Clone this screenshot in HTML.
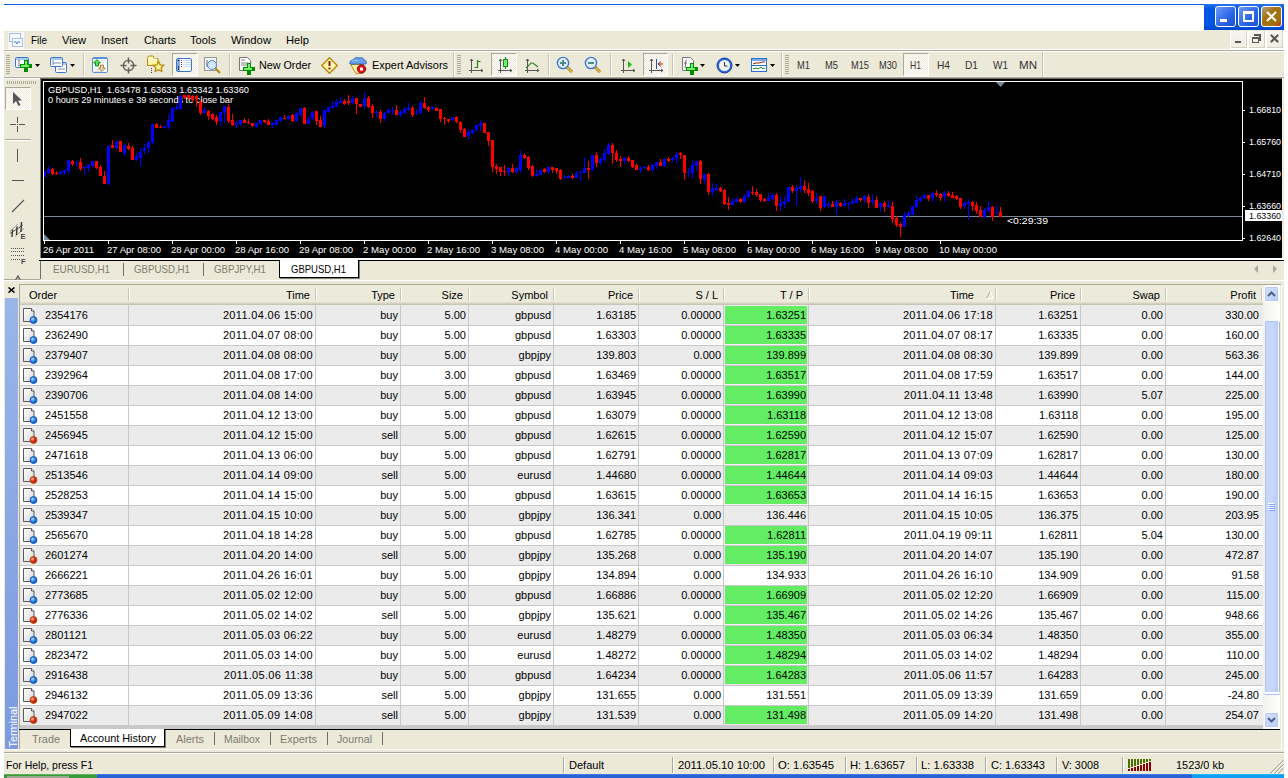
<!DOCTYPE html><html><head><meta charset="utf-8"><style>

*{box-sizing:border-box}
body{margin:0;width:1288px;height:778px;position:relative;overflow:hidden;background:#fff;font-family:"Liberation Sans",sans-serif;font-size:11px;color:#000}
.a{position:absolute}
.t{position:absolute;white-space:nowrap;line-height:13px}
.r{position:absolute;white-space:nowrap;line-height:13px;text-align:right}
</style></head><body>
<svg width="0" height="0" style="position:absolute"><defs><linearGradient id="gd" x1="0" y1="0" x2="1" y2="1"><stop offset="0" stop-color="#fff"/><stop offset="1" stop-color="#d8d8d8"/></linearGradient><radialGradient id="gb" cx="0.35" cy="0.35" r="0.7"><stop offset="0" stop-color="#b8e0ff"/><stop offset="0.5" stop-color="#2a8af0"/><stop offset="1" stop-color="#0a50c0"/></radialGradient><radialGradient id="gr" cx="0.35" cy="0.35" r="0.7"><stop offset="0" stop-color="#ffd0c0"/><stop offset="0.5" stop-color="#f02010"/><stop offset="1" stop-color="#b02000"/></radialGradient></defs></svg>

<div class="a" style="left:4px;top:4px;width:1200px;height:1px;background:#0a5ce8"></div>
<div class="a" style="left:1204px;top:4px;width:80px;height:26px;background:linear-gradient(#2a74f0,#0054e3 20%,#0055e6 80%,#0046c8)"></div>
<div class="a" style="left:1215px;top:6px;width:21px;height:21px;border:1px solid #fff;border-radius:3px;background:linear-gradient(135deg,#6f9cf8,#2a64e8 60%,#1d4fd0)"></div>
<div class="a" style="left:1238px;top:6px;width:21px;height:21px;border:1px solid #fff;border-radius:3px;background:linear-gradient(135deg,#6f9cf8,#2a64e8 60%,#1d4fd0)"></div>
<div class="a" style="left:1261px;top:6px;width:21px;height:21px;border:1px solid #fff;border-radius:3px;background:linear-gradient(135deg,#b0a080,#a6700e 40%,#a07010 80%,#e02010)"></div>
<div class="a" style="left:1220px;top:19px;width:7px;height:3px;background:#fff"></div>
<div class="a" style="left:1243px;top:11px;width:11px;height:11px;border:2px solid #fff;border-top-width:3px"></div>
<svg class="a" style="left:1261px;top:6px" width="21" height="21"><path d="M6 6L15 15M15 6L6 15" stroke="#fff" stroke-width="2"/></svg>
<div class="a" style="left:4px;top:31px;width:1280px;height:743px;background:#ece9d8"></div>
<div class="a" style="left:1204px;top:30px;width:80px;height:1px;background:#ece9d8"></div>
<div class="a" style="left:8px;top:32px;width:16px;height:17px;background:#f8f8f4"></div>
<svg class="a" style="left:8px;top:32px" width="16" height="16"><rect x="1.5" y="1.5" width="11" height="8" fill="none" stroke="#4a8af0" stroke-dasharray="1 1"/><rect x="4.5" y="6.5" width="10" height="8" fill="#fff" stroke="#4a8af0" stroke-dasharray="1 1"/><path d="M6 11l1.5-2 1.5 3 1.5-3 1.5 2" stroke="#4a8af0" fill="none"/></svg>
<svg class="a" style="left:30px;top:30px;overflow:visible" width="19" height="18"><text x="1" y="14" textLength="16" lengthAdjust="spacingAndGlyphs" font-family="Liberation Sans" font-size="11" font-weight="normal" fill="#000" xml:space="preserve">File</text></svg>
<svg class="a" style="left:61px;top:30px;overflow:visible" width="27" height="18"><text x="1" y="14" textLength="24" lengthAdjust="spacingAndGlyphs" font-family="Liberation Sans" font-size="11" font-weight="normal" fill="#000" xml:space="preserve">View</text></svg>
<svg class="a" style="left:100px;top:30px;overflow:visible" width="30" height="18"><text x="1" y="14" textLength="27" lengthAdjust="spacingAndGlyphs" font-family="Liberation Sans" font-size="11" font-weight="normal" fill="#000" xml:space="preserve">Insert</text></svg>
<svg class="a" style="left:143px;top:30px;overflow:visible" width="35" height="18"><text x="1" y="14" textLength="32" lengthAdjust="spacingAndGlyphs" font-family="Liberation Sans" font-size="11" font-weight="normal" fill="#000" xml:space="preserve">Charts</text></svg>
<svg class="a" style="left:189px;top:30px;overflow:visible" width="29" height="18"><text x="1" y="14" textLength="26" lengthAdjust="spacingAndGlyphs" font-family="Liberation Sans" font-size="11" font-weight="normal" fill="#000" xml:space="preserve">Tools</text></svg>
<svg class="a" style="left:230px;top:30px;overflow:visible" width="43" height="18"><text x="1" y="14" textLength="40" lengthAdjust="spacingAndGlyphs" font-family="Liberation Sans" font-size="11" font-weight="normal" fill="#000" xml:space="preserve">Window</text></svg>
<svg class="a" style="left:285px;top:30px;overflow:visible" width="26" height="18"><text x="1" y="14" textLength="23" lengthAdjust="spacingAndGlyphs" font-family="Liberation Sans" font-size="11" font-weight="normal" fill="#000" xml:space="preserve">Help</text></svg>
<div class="a" style="left:1230px;top:31px;width:54px;height:18px;background:#fff"></div>
<div class="a" style="left:1231px;top:31px;width:16px;height:17px;background:linear-gradient(#f6f5f0,#efede4);border-right:1px solid #d6d2c4;border-bottom:1px solid #d6d2c4"></div>
<div class="a" style="left:1249px;top:31px;width:16px;height:17px;background:linear-gradient(#f6f5f0,#efede4);border-right:1px solid #d6d2c4;border-bottom:1px solid #d6d2c4"></div>
<div class="a" style="left:1267px;top:31px;width:16px;height:17px;background:linear-gradient(#f6f5f0,#efede4);border-right:1px solid #d6d2c4;border-bottom:1px solid #d6d2c4"></div>
<div class="a" style="left:1235px;top:41px;width:6px;height:2px;background:#5a5850"></div>
<svg class="a" style="left:1249px;top:31px" width="16" height="16"><path d="M6 4h5v5" stroke="#5a5850" stroke-width="2" fill="none" stroke-linecap="square"/><rect x="3.5" y="6.5" width="6" height="5" fill="none" stroke="#5a5850"/><rect x="3" y="6" width="7" height="2" fill="#5a5850"/></svg>
<svg class="a" style="left:1267px;top:31px" width="16" height="16"><path d="M4.5 4.5L10.5 10.5M10.5 4.5L4.5 10.5" stroke="#5a5850" stroke-width="2.2" stroke-linecap="round"/></svg>
<div class="a" style="left:4px;top:49px;width:1280px;height:1px;background:#fff"></div>
<div class="a" style="left:4px;top:50px;width:1280px;height:1px;background:#aca899"></div>
<div class="a" style="left:4px;top:51px;width:1280px;height:1px;background:#fff"></div>
<div class="a" style="left:4px;top:76px;width:1280px;height:1px;background:#f4f2e8"></div>
<div class="a" style="left:4px;top:77px;width:1280px;height:1px;background:#aca899"></div>
<svg class="a" style="left:6px;top:55px" width="4" height="20"><rect x="0" y="0" width="4" height="1" fill="#aeaa98"/><rect x="0" y="2" width="4" height="1" fill="#aeaa98"/><rect x="0" y="4" width="4" height="1" fill="#aeaa98"/><rect x="0" y="6" width="4" height="1" fill="#aeaa98"/><rect x="0" y="8" width="4" height="1" fill="#aeaa98"/><rect x="0" y="10" width="4" height="1" fill="#aeaa98"/><rect x="0" y="12" width="4" height="1" fill="#aeaa98"/><rect x="0" y="14" width="4" height="1" fill="#aeaa98"/><rect x="0" y="16" width="4" height="1" fill="#aeaa98"/><rect x="0" y="18" width="4" height="1" fill="#aeaa98"/></svg>
<svg class="a" style="left:15px;top:57px" width="14" height="11"><rect x="0.5" y="0.5" width="13" height="10" rx="1" fill="#fff" stroke="#3a78d0"/><rect x="1" y="1" width="12" height="2" fill="#a8c8f0"/></svg>
<svg class="a" style="left:15px;top:57px" width="14" height="11"><path d="M4 3v6M3 4l1-1 1 1M3 8l1 1 1-1" stroke="#7890b0" fill="none"/></svg>
<svg class="a" style="left:20px;top:60px" width="12" height="12"><path d="M4 0h4v4h4v4h-4v4h-4v-4h-4v-4h4z" fill="#008a00"/><rect x="5" y="1" width="2" height="5" fill="#70f070"/><rect x="1" y="5" width="8" height="2" fill="#70f070"/></svg>
<svg class="a" style="left:35px;top:64px" width="5" height="3"><path d="M0 0h5l-2.5 3z" fill="#000"/></svg>
<svg class="a" style="left:55px;top:62px" width="12" height="11"><rect x="0.5" y="0.5" width="11" height="10" rx="1" fill="#fff" stroke="#3a78d0"/><rect x="1" y="1" width="10" height="2" fill="#a8c8f0"/></svg>
<svg class="a" style="left:50px;top:57px" width="13" height="10"><rect x="0.5" y="0.5" width="12" height="9" rx="1" fill="#fff" stroke="#3a78d0"/><rect x="1" y="1" width="11" height="2" fill="#a8c8f0"/></svg>
<svg class="a" style="left:50px;top:57px" width="18" height="17"><path d="M3 3v5M3 6h8M8 12h7" stroke="#7890b0" fill="none"/></svg>
<svg class="a" style="left:70px;top:64px" width="5" height="3"><path d="M0 0h5l-2.5 3z" fill="#000"/></svg>
<div class="a" style="left:83px;top:54px;width:1px;height:21px;background:#c5c2b2"></div><div class="a" style="left:84px;top:54px;width:1px;height:21px;background:#fff"></div>
<svg class="a" style="left:92px;top:57px" width="17" height="17"><rect x="0.5" y="0.5" width="15" height="15" rx="1.5" fill="#fff" stroke="#5a90e0"/><rect x="1" y="1" width="14" height="1" fill="#5a90e0"/><path d="M9 3.5h3M13 3.5h1M9 5.5h3M13 5.5h1M3 12.5h7M3 14.5h7" stroke="#dcdcdc"/><path d="M5 2.5l3.5 3.5h-2v3h-3v-3h-2z" fill="#60e060" stroke="#008000" stroke-width="0.9"/><path d="M10 14.5l-3.5-3.5h2v-3h3v3h2z" fill="#d8d8d0" stroke="#b07a10" stroke-width="0.9"/></svg>
<svg class="a" style="left:120px;top:57px" width="17" height="17"><circle cx="8.5" cy="8.5" r="5.2" fill="none" stroke="#5e5e5e" stroke-width="1.3"/><path d="M8.5 0.5v6M8.5 10.5v6M0.5 8.5h6M10.5 8.5h6" stroke="#5e5e5e" stroke-width="1.5"/></svg>
<svg class="a" style="left:146px;top:55px" width="20" height="20"><path d="M1.5 3.5c0-2 1-2.5 2.5-2.5h2c1.5 0 2 .5 2 2.5h4v7h-10.5z" fill="#fff8a8" stroke="#b8860b"/><path d="M2 4h9" stroke="#fff" /><path d="M12.5 6.5l1.7 3.3 3.6.5-2.6 2.5.6 3.6-3.3-1.7-3.3 1.7.6-3.6-2.6-2.5 3.6-.5z" fill="#fffaa0" stroke="#b8860b" stroke-width="1.3"/><rect x="5" y="13" width="1" height="1" fill="#444"/><rect x="5" y="15" width="1" height="1" fill="#444"/><rect x="5" y="17" width="1" height="1" fill="#444"/></svg>
<div class="a" style="left:172px;top:53px;width:26px;height:23px;border-top:1px solid #aca899;border-left:1px solid #aca899;border-right:1px solid #fff;border-bottom:1px solid #fff;background-color:#f5f4ee;background-image:repeating-conic-gradient(#fff 0 25%,#ece9d8 0 50%);background-size:2px 2px"></div>
<svg class="a" style="left:176px;top:58px" width="17" height="15"><rect x="0.5" y="0.5" width="15" height="13" rx="1.5" fill="#fff" stroke="#3a78d0"/><rect x="1" y="1" width="3" height="12" fill="#8aa8e0"/><rect x="2" y="2" width="1" height="1" fill="#000"/><rect x="2" y="8" width="1" height="4" fill="#444"/><rect x="7" y="2" width="8" height="1" fill="#c8dcf8"/><rect x="7" y="4" width="8" height="1" fill="#c8dcf8"/><rect x="7" y="6" width="8" height="1" fill="#c8dcf8"/><rect x="7" y="8" width="8" height="1" fill="#c8dcf8"/><rect x="5" y="2" width="1" height="1" fill="#e00"/><rect x="5" y="4" width="1" height="1" fill="#444"/><rect x="5" y="6" width="1" height="1" fill="#444"/><rect x="5" y="8" width="1" height="1" fill="#e00"/></svg>
<svg class="a" style="left:204px;top:57px" width="19" height="18"><rect x="0.5" y="0.5" width="12" height="13" fill="#f4f4f4" stroke="#999"/><path d="M3 3v7M9 3v7" stroke="#666"/><circle cx="8" cy="8" r="4.5" fill="#d8e8ff" stroke="#4a8ae0"/><path d="M11 11l5 5" stroke="#b08a10" stroke-width="2.2"/></svg>
<div class="a" style="left:229px;top:54px;width:1px;height:21px;background:#c5c2b2"></div><div class="a" style="left:230px;top:54px;width:1px;height:21px;background:#fff"></div>
<svg class="a" style="left:239px;top:57px" width="17" height="19"><path d="M0.5 0.5h8l3 3v10h-11z" fill="#fafafa" stroke="#777"/><path d="M2 3h4M2 6h7M2 8h7" stroke="#888"/></svg>
<svg class="a" style="left:243px;top:63px" width="12" height="12"><path d="M4 0h4v4h4v4h-4v4h-4v-4h-4v-4h4z" fill="#008a00"/><rect x="5" y="1" width="2" height="5" fill="#70f070"/><rect x="1" y="5" width="8" height="2" fill="#70f070"/></svg>
<svg class="a" style="left:258px;top:55px;overflow:visible" width="55" height="18"><text x="1" y="14" textLength="52" lengthAdjust="spacingAndGlyphs" font-family="Liberation Sans" font-size="11" font-weight="normal" fill="#000" xml:space="preserve">New Order</text></svg>
<svg class="a" style="left:321px;top:57px" width="17" height="17"><path d="M8.5 0.7l7.8 7.8-7.8 7.8-7.8-7.8z" fill="#fff8a8" stroke="#b8860b" stroke-width="1.4"/><path d="M8.5 4v5" stroke="#8a1a1a" stroke-width="2"/><rect x="7.5" y="10.5" width="2" height="2" fill="#8a1a1a"/></svg>
<svg class="a" style="left:348px;top:56px" width="20" height="19"><path d="M2.5 8.5h13l-2 8-5 1.5z" fill="#fff7a0" stroke="#b8860b"/><path d="M2 8c-1-2 1-4 3-4 1-2 4-3 6-2 2-1 5 0 5 2 2 0 3 2 2 4z" fill="#6aa0e8" stroke="#3a70c0"/><path d="M4 5c2-1 4-1 6 0" stroke="#a8ccf8" fill="none"/><circle cx="13.5" cy="13" r="4.2" fill="#e81010" stroke="#7a1010"/><rect x="12" y="11.5" width="3" height="3" fill="#fff"/></svg>
<svg class="a" style="left:371px;top:55px;overflow:visible" width="79" height="18"><text x="1" y="14" textLength="76" lengthAdjust="spacingAndGlyphs" font-family="Liberation Sans" font-size="11" font-weight="normal" fill="#000" xml:space="preserve">Expert Advisors</text></svg>
<div class="a" style="left:453px;top:52px;width:1px;height:25px;background:#c5c2b2"></div><div class="a" style="left:454px;top:52px;width:1px;height:25px;background:#fff"></div>
<svg class="a" style="left:457px;top:55px" width="4" height="20"><rect x="0" y="0" width="4" height="1" fill="#aeaa98"/><rect x="0" y="2" width="4" height="1" fill="#aeaa98"/><rect x="0" y="4" width="4" height="1" fill="#aeaa98"/><rect x="0" y="6" width="4" height="1" fill="#aeaa98"/><rect x="0" y="8" width="4" height="1" fill="#aeaa98"/><rect x="0" y="10" width="4" height="1" fill="#aeaa98"/><rect x="0" y="12" width="4" height="1" fill="#aeaa98"/><rect x="0" y="14" width="4" height="1" fill="#aeaa98"/><rect x="0" y="16" width="4" height="1" fill="#aeaa98"/><rect x="0" y="18" width="4" height="1" fill="#aeaa98"/></svg>
<svg class="a" style="left:467px;top:58px" width="18" height="17"><path d="M4.5 1v14M2 12.5h14" stroke="#555" stroke-width="1"/><path d="M3 3l1.5-2 1.5 2M14 11l2 1.5-2 1.5" stroke="#555" fill="none"/><path d="M10.5 2v8M10.5 3.5h3M7.5 9.5h3" stroke="#1a8a1a" stroke-width="1.2" fill="none"/></svg>
<div class="a" style="left:491px;top:53px;width:26px;height:23px;border-top:1px solid #aca899;border-left:1px solid #aca899;border-right:1px solid #fff;border-bottom:1px solid #fff;background-color:#f5f4ee;background-image:repeating-conic-gradient(#fff 0 25%,#ece9d8 0 50%);background-size:2px 2px"></div>
<svg class="a" style="left:496px;top:57px" width="18" height="17"><path d="M4.5 2v14M2 13.5h14" stroke="#555" stroke-width="1"/><path d="M3 4l1.5-2 1.5 2M14 12l2 1.5-2 1.5" stroke="#555" fill="none"/><path d="M9.5 0v12" stroke="#1a8a1a" stroke-width="1.2"/><rect x="7.5" y="2.5" width="4" height="7" fill="#70f070" stroke="#1a8a1a"/></svg>
<svg class="a" style="left:523px;top:58px" width="18" height="17"><path d="M4.5 1v14M2 12.5h14" stroke="#555" stroke-width="1"/><path d="M3 3l1.5-2 1.5 2M14 11l2 1.5-2 1.5" stroke="#555" fill="none"/><path d="M3 10l5-5 2 0 5 4" stroke="#2a8a2a" fill="none" stroke-width="1.2"/></svg>
<div class="a" style="left:548px;top:54px;width:1px;height:21px;background:#c5c2b2"></div><div class="a" style="left:549px;top:54px;width:1px;height:21px;background:#fff"></div>
<svg class="a" style="left:556px;top:56px" width="19" height="19"><path d="M10 10l6 6" stroke="#9a7a10" stroke-width="3"/><path d="M10 10l6 6" stroke="#e8c050" stroke-width="1.5"/><circle cx="7" cy="7" r="5.6" fill="#e4ecfa" stroke="#3a78d0" stroke-width="1.4"/><path d="M4 7h6M7 4v6" stroke="#4a8a8a" stroke-width="2"/></svg>
<svg class="a" style="left:584px;top:56px" width="19" height="19"><path d="M10 10l6 6" stroke="#9a7a10" stroke-width="3"/><path d="M10 10l6 6" stroke="#e8c050" stroke-width="1.5"/><circle cx="7" cy="7" r="5.6" fill="#e4ecfa" stroke="#3a78d0" stroke-width="1.4"/><path d="M4 7h6" stroke="#4a8a8a" stroke-width="2"/></svg>
<div class="a" style="left:610px;top:54px;width:1px;height:21px;background:#c5c2b2"></div><div class="a" style="left:611px;top:54px;width:1px;height:21px;background:#fff"></div>
<svg class="a" style="left:619px;top:58px" width="18" height="17"><path d="M4.5 1v14M2 12.5h14" stroke="#555" stroke-width="1"/><path d="M3 3l1.5-2 1.5 2M14 11l2 1.5-2 1.5" stroke="#555" fill="none"/><path d="M9 3v7l4-3.5z" fill="#1ac01a"/></svg>
<div class="a" style="left:643px;top:53px;width:25px;height:23px;border-top:1px solid #aca899;border-left:1px solid #aca899;border-right:1px solid #fff;border-bottom:1px solid #fff;background-color:#f5f4ee;background-image:repeating-conic-gradient(#fff 0 25%,#ece9d8 0 50%);background-size:2px 2px"></div>
<svg class="a" style="left:647px;top:58px" width="18" height="17"><path d="M4.5 1v14M2 12.5h14" stroke="#555" stroke-width="1"/><path d="M3 3l1.5-2 1.5 2M14 11l2 1.5-2 1.5" stroke="#555" fill="none"/><path d="M9.5 1v10" stroke="#2050c0"/><path d="M11 6h5M11 6l3-2.5M11 6l3 2.5" stroke="#a02010" fill="none"/></svg>
<div class="a" style="left:672px;top:54px;width:1px;height:21px;background:#c5c2b2"></div><div class="a" style="left:673px;top:54px;width:1px;height:21px;background:#fff"></div>
<svg class="a" style="left:682px;top:57px" width="12" height="14"><path d="M0.5 0.5h8l3 3v10h-11z" fill="#fafafa" stroke="#777"/><path d="M5 3c-2 0-1 4-2 8M2 6h3" stroke="#666" fill="none"/></svg>
<svg class="a" style="left:686px;top:63px" width="12" height="12"><path d="M4 0h4v4h4v4h-4v4h-4v-4h-4v-4h4z" fill="#008a00"/><rect x="5" y="1" width="2" height="5" fill="#70f070"/><rect x="1" y="5" width="8" height="2" fill="#70f070"/></svg>
<svg class="a" style="left:700px;top:64px" width="5" height="3"><path d="M0 0h5l-2.5 3z" fill="#000"/></svg>
<svg class="a" style="left:716px;top:57px" width="17" height="17"><circle cx="8.5" cy="8.5" r="7.5" fill="#2a6ae0" stroke="#1040a0"/><circle cx="8.5" cy="8.5" r="5.5" fill="#f4f4f4"/><path d="M8.5 5v4h3" stroke="#333" fill="none"/></svg>
<svg class="a" style="left:735px;top:64px" width="5" height="3"><path d="M0 0h5l-2.5 3z" fill="#000"/></svg>
<svg class="a" style="left:751px;top:58px" width="17" height="15"><rect x="0.5" y="0.5" width="15" height="13" fill="#fff" stroke="#2a70d0"/><rect x="1" y="1" width="14" height="2" fill="#7aa8e8"/><path d="M1 7.5h14" stroke="#2a70d0"/><path d="M2 6l3-1 3 0 3-1 3 0" stroke="#a02010" fill="none"/><path d="M2 11l3-1 2 1 3-2 2 2 2-1" stroke="#1a8a1a" fill="none"/></svg>
<svg class="a" style="left:770px;top:64px" width="5" height="3"><path d="M0 0h5l-2.5 3z" fill="#000"/></svg>
<div class="a" style="left:781px;top:52px;width:1px;height:25px;background:#c5c2b2"></div><div class="a" style="left:782px;top:52px;width:1px;height:25px;background:#fff"></div>
<svg class="a" style="left:785px;top:55px" width="4" height="20"><rect x="0" y="0" width="4" height="1" fill="#aeaa98"/><rect x="0" y="2" width="4" height="1" fill="#aeaa98"/><rect x="0" y="4" width="4" height="1" fill="#aeaa98"/><rect x="0" y="6" width="4" height="1" fill="#aeaa98"/><rect x="0" y="8" width="4" height="1" fill="#aeaa98"/><rect x="0" y="10" width="4" height="1" fill="#aeaa98"/><rect x="0" y="12" width="4" height="1" fill="#aeaa98"/><rect x="0" y="14" width="4" height="1" fill="#aeaa98"/><rect x="0" y="16" width="4" height="1" fill="#aeaa98"/><rect x="0" y="18" width="4" height="1" fill="#aeaa98"/></svg>
<div class="a" style="left:903px;top:53px;width:26px;height:23px;border-top:1px solid #aca899;border-left:1px solid #aca899;border-right:1px solid #fff;border-bottom:1px solid #fff;background-color:#f5f4ee;background-image:repeating-conic-gradient(#fff 0 25%,#ece9d8 0 50%);background-size:2px 2px"></div>
<svg class="a" style="left:796px;top:55px;overflow:visible" width="16" height="18"><text x="1" y="14" textLength="13" lengthAdjust="spacingAndGlyphs" font-family="Liberation Sans" font-size="11" font-weight="normal" fill="#333" xml:space="preserve">M1</text></svg>
<svg class="a" style="left:824px;top:55px;overflow:visible" width="16" height="18"><text x="1" y="14" textLength="13" lengthAdjust="spacingAndGlyphs" font-family="Liberation Sans" font-size="11" font-weight="normal" fill="#333" xml:space="preserve">M5</text></svg>
<svg class="a" style="left:850px;top:55px;overflow:visible" width="21" height="18"><text x="1" y="14" textLength="18" lengthAdjust="spacingAndGlyphs" font-family="Liberation Sans" font-size="11" font-weight="normal" fill="#333" xml:space="preserve">M15</text></svg>
<svg class="a" style="left:878px;top:55px;overflow:visible" width="21" height="18"><text x="1" y="14" textLength="18" lengthAdjust="spacingAndGlyphs" font-family="Liberation Sans" font-size="11" font-weight="normal" fill="#333" xml:space="preserve">M30</text></svg>
<svg class="a" style="left:909px;top:55px;overflow:visible" width="14" height="18"><text x="1" y="14" textLength="11" lengthAdjust="spacingAndGlyphs" font-family="Liberation Sans" font-size="11" font-weight="normal" fill="#333" xml:space="preserve">H1</text></svg>
<svg class="a" style="left:936px;top:55px;overflow:visible" width="16" height="18"><text x="1" y="14" textLength="13" lengthAdjust="spacingAndGlyphs" font-family="Liberation Sans" font-size="11" font-weight="normal" fill="#333" xml:space="preserve">H4</text></svg>
<svg class="a" style="left:964px;top:55px;overflow:visible" width="16" height="18"><text x="1" y="14" textLength="13" lengthAdjust="spacingAndGlyphs" font-family="Liberation Sans" font-size="11" font-weight="normal" fill="#333" xml:space="preserve">D1</text></svg>
<svg class="a" style="left:992px;top:55px;overflow:visible" width="18" height="18"><text x="1" y="14" textLength="15" lengthAdjust="spacingAndGlyphs" font-family="Liberation Sans" font-size="11" font-weight="normal" fill="#333" xml:space="preserve">W1</text></svg>
<svg class="a" style="left:1018px;top:55px;overflow:visible" width="21" height="18"><text x="1" y="14" textLength="18" lengthAdjust="spacingAndGlyphs" font-family="Liberation Sans" font-size="11" font-weight="normal" fill="#333" xml:space="preserve">MN</text></svg>
<div class="a" style="left:1042px;top:52px;width:1px;height:25px;background:#c5c2b2"></div><div class="a" style="left:1043px;top:52px;width:1px;height:25px;background:#fff"></div>
<div class="a" style="left:4px;top:78px;width:36px;height:202px;background:#ece9d8;border-top:1px solid #fff"></div>
<svg class="a" style="left:7px;top:81px" width="30" height="3"><rect x="0" y="0" width="1" height="3" fill="#aeaa98"/><rect x="2" y="0" width="1" height="3" fill="#aeaa98"/><rect x="4" y="0" width="1" height="3" fill="#aeaa98"/><rect x="6" y="0" width="1" height="3" fill="#aeaa98"/><rect x="8" y="0" width="1" height="3" fill="#aeaa98"/><rect x="10" y="0" width="1" height="3" fill="#aeaa98"/><rect x="12" y="0" width="1" height="3" fill="#aeaa98"/><rect x="14" y="0" width="1" height="3" fill="#aeaa98"/><rect x="16" y="0" width="1" height="3" fill="#aeaa98"/><rect x="18" y="0" width="1" height="3" fill="#aeaa98"/><rect x="20" y="0" width="1" height="3" fill="#aeaa98"/><rect x="22" y="0" width="1" height="3" fill="#aeaa98"/><rect x="24" y="0" width="1" height="3" fill="#aeaa98"/><rect x="26" y="0" width="1" height="3" fill="#aeaa98"/><rect x="28" y="0" width="1" height="3" fill="#aeaa98"/></svg>
<div class="a" style="left:5px;top:87px;width:26px;height:23px;border-top:1px solid #aca899;border-left:1px solid #aca899;border-right:1px solid #fff;border-bottom:1px solid #fff;background-color:#f5f4ee;background-image:repeating-conic-gradient(#fff 0 25%,#ece9d8 0 50%);background-size:2px 2px"></div>
<svg class="a" style="left:12px;top:91px" width="12" height="16"><path d="M1 1v12l3-3 2.5 5 2-1-2.5-4.5h4z" fill="#555"/></svg>
<svg class="a" style="left:9px;top:116px" width="17" height="17"><path d="M8.5 1v6M8.5 10v6M1 8.5h6M10 8.5h6" stroke="#555"/><rect x="8" y="8" width="1" height="1" fill="#555"/></svg>
<div class="a" style="left:5px;top:139px;width:26px;height:1px;background:#aca899"></div><div class="a" style="left:5px;top:140px;width:26px;height:1px;background:#fff"></div>
<div class="a" style="left:17px;top:149px;width:1px;height:13px;background:#555"></div>
<div class="a" style="left:12px;top:180px;width:12px;height:1px;background:#555"></div>
<svg class="a" style="left:10px;top:197px" width="17" height="17"><path d="M2 15L14 3" stroke="#555" stroke-width="1.1"/></svg>
<svg class="a" style="left:9px;top:220px" width="20" height="20"><path d="M0.7 11.7L9 4M6 16.7L15 8.3" stroke="#9a9a9a" stroke-width="1"/><path d="M1 13.5L14 5" stroke="#555" stroke-width="1"/><path d="M3.5 9.5L3 17M8 6.5L7.5 15M12.5 2L12 12" stroke="#3a3a3a" stroke-width="1.4"/><text x="11.6" y="19" font-family="Liberation Sans" font-weight="bold" font-size="7.5" fill="#444">E</text></svg>
<svg class="a" style="left:10px;top:246px" width="20" height="20"><rect x="1" y="2" width="1" height="1" fill="#555"/><rect x="3" y="2" width="1" height="1" fill="#555"/><rect x="5" y="2" width="1" height="1" fill="#555"/><rect x="7" y="2" width="1" height="1" fill="#555"/><rect x="9" y="2" width="1" height="1" fill="#555"/><rect x="11" y="2" width="1" height="1" fill="#555"/><rect x="13" y="2" width="1" height="1" fill="#555"/><rect x="1" y="5" width="1" height="1" fill="#555"/><rect x="3" y="5" width="1" height="1" fill="#555"/><rect x="5" y="5" width="1" height="1" fill="#555"/><rect x="7" y="5" width="1" height="1" fill="#555"/><rect x="9" y="5" width="1" height="1" fill="#555"/><rect x="11" y="5" width="1" height="1" fill="#555"/><rect x="13" y="5" width="1" height="1" fill="#555"/><rect x="1" y="9" width="1" height="1" fill="#555"/><rect x="3" y="9" width="1" height="1" fill="#555"/><rect x="5" y="9" width="1" height="1" fill="#555"/><rect x="7" y="9" width="1" height="1" fill="#555"/><rect x="9" y="9" width="1" height="1" fill="#555"/><rect x="11" y="9" width="1" height="1" fill="#555"/><rect x="13" y="9" width="1" height="1" fill="#555"/><rect x="1" y="13" width="1" height="1" fill="#555"/><rect x="3" y="13" width="1" height="1" fill="#555"/><rect x="5" y="13" width="1" height="1" fill="#555"/><rect x="7" y="13" width="1" height="1" fill="#555"/><rect x="9" y="13" width="1" height="1" fill="#555"/><text x="11" y="18" font-family="Liberation Sans" font-weight="bold" font-size="7.5" fill="#444">F</text></svg>
<div class="a" style="left:4px;top:279px;width:36px;height:1px;background:#aca899"></div>
<svg class="a" style="left:15px;top:275px" width="6" height="5"><path d="M0.5 5L3 0.5 5.5 5M1.5 3h3" stroke="#555" fill="none"/></svg>
<div class="a" style="left:40px;top:78px;width:1244px;height:182px;background:#ece9d8"></div>
<div class="a" style="left:40px;top:78px;width:1242px;height:180px;background:#000;border-top:1px solid #6e6c60;border-left:1px solid #8a877a"></div>
<div class="a" style="left:1282px;top:78px;width:1px;height:181px;background:#f4f2e8"></div>
<svg class="a" style="left:47px;top:80px;overflow:visible" width="204" height="17"><text x="1" y="13" textLength="201" lengthAdjust="spacingAndGlyphs" font-family="Liberation Sans" font-size="9.9" font-weight="normal" fill="#fff" xml:space="preserve">GBPUSD,H1  1.63478 1.63633 1.63342 1.63360</text></svg>
<svg class="a" style="left:47px;top:90px;overflow:visible" width="188" height="17"><text x="1" y="13" textLength="185" lengthAdjust="spacingAndGlyphs" font-family="Liberation Sans" font-size="9.9" font-weight="normal" fill="#fff" xml:space="preserve">0 hours 29 minutes e 39 seconds to close bar</text></svg>
<div class="a" style="left:44px;top:241px;width:1px;height:3px;background:#fff"></div>
<svg class="a" style="left:42px;top:240px;overflow:visible" width="54" height="17"><text x="1" y="13" textLength="51" lengthAdjust="spacingAndGlyphs" font-family="Liberation Sans" font-size="9.9" font-weight="normal" fill="#fff" xml:space="preserve">26 Apr 2011</text></svg>
<div class="a" style="left:108px;top:241px;width:1px;height:3px;background:#fff"></div>
<svg class="a" style="left:106px;top:240px;overflow:visible" width="57" height="17"><text x="1" y="13" textLength="54" lengthAdjust="spacingAndGlyphs" font-family="Liberation Sans" font-size="9.9" font-weight="normal" fill="#fff" xml:space="preserve">27 Apr 08:00</text></svg>
<div class="a" style="left:172px;top:241px;width:1px;height:3px;background:#fff"></div>
<svg class="a" style="left:170px;top:240px;overflow:visible" width="57" height="17"><text x="1" y="13" textLength="54" lengthAdjust="spacingAndGlyphs" font-family="Liberation Sans" font-size="9.9" font-weight="normal" fill="#fff" xml:space="preserve">28 Apr 00:00</text></svg>
<div class="a" style="left:236px;top:241px;width:1px;height:3px;background:#fff"></div>
<svg class="a" style="left:234px;top:240px;overflow:visible" width="57" height="17"><text x="1" y="13" textLength="54" lengthAdjust="spacingAndGlyphs" font-family="Liberation Sans" font-size="9.9" font-weight="normal" fill="#fff" xml:space="preserve">28 Apr 16:00</text></svg>
<div class="a" style="left:300px;top:241px;width:1px;height:3px;background:#fff"></div>
<svg class="a" style="left:298px;top:240px;overflow:visible" width="57" height="17"><text x="1" y="13" textLength="54" lengthAdjust="spacingAndGlyphs" font-family="Liberation Sans" font-size="9.9" font-weight="normal" fill="#fff" xml:space="preserve">29 Apr 08:00</text></svg>
<div class="a" style="left:364px;top:241px;width:1px;height:3px;background:#fff"></div>
<svg class="a" style="left:362px;top:240px;overflow:visible" width="56" height="17"><text x="1" y="13" textLength="53" lengthAdjust="spacingAndGlyphs" font-family="Liberation Sans" font-size="9.9" font-weight="normal" fill="#fff" xml:space="preserve">2 May 00:00</text></svg>
<div class="a" style="left:428px;top:241px;width:1px;height:3px;background:#fff"></div>
<svg class="a" style="left:426px;top:240px;overflow:visible" width="56" height="17"><text x="1" y="13" textLength="53" lengthAdjust="spacingAndGlyphs" font-family="Liberation Sans" font-size="9.9" font-weight="normal" fill="#fff" xml:space="preserve">2 May 16:00</text></svg>
<div class="a" style="left:492px;top:241px;width:1px;height:3px;background:#fff"></div>
<svg class="a" style="left:490px;top:240px;overflow:visible" width="56" height="17"><text x="1" y="13" textLength="53" lengthAdjust="spacingAndGlyphs" font-family="Liberation Sans" font-size="9.9" font-weight="normal" fill="#fff" xml:space="preserve">3 May 08:00</text></svg>
<div class="a" style="left:556px;top:241px;width:1px;height:3px;background:#fff"></div>
<svg class="a" style="left:554px;top:240px;overflow:visible" width="56" height="17"><text x="1" y="13" textLength="53" lengthAdjust="spacingAndGlyphs" font-family="Liberation Sans" font-size="9.9" font-weight="normal" fill="#fff" xml:space="preserve">4 May 00:00</text></svg>
<div class="a" style="left:620px;top:241px;width:1px;height:3px;background:#fff"></div>
<svg class="a" style="left:618px;top:240px;overflow:visible" width="56" height="17"><text x="1" y="13" textLength="53" lengthAdjust="spacingAndGlyphs" font-family="Liberation Sans" font-size="9.9" font-weight="normal" fill="#fff" xml:space="preserve">4 May 16:00</text></svg>
<div class="a" style="left:684px;top:241px;width:1px;height:3px;background:#fff"></div>
<svg class="a" style="left:682px;top:240px;overflow:visible" width="56" height="17"><text x="1" y="13" textLength="53" lengthAdjust="spacingAndGlyphs" font-family="Liberation Sans" font-size="9.9" font-weight="normal" fill="#fff" xml:space="preserve">5 May 08:00</text></svg>
<div class="a" style="left:748px;top:241px;width:1px;height:3px;background:#fff"></div>
<svg class="a" style="left:746px;top:240px;overflow:visible" width="56" height="17"><text x="1" y="13" textLength="53" lengthAdjust="spacingAndGlyphs" font-family="Liberation Sans" font-size="9.9" font-weight="normal" fill="#fff" xml:space="preserve">6 May 00:00</text></svg>
<div class="a" style="left:812px;top:241px;width:1px;height:3px;background:#fff"></div>
<svg class="a" style="left:810px;top:240px;overflow:visible" width="56" height="17"><text x="1" y="13" textLength="53" lengthAdjust="spacingAndGlyphs" font-family="Liberation Sans" font-size="9.9" font-weight="normal" fill="#fff" xml:space="preserve">6 May 16:00</text></svg>
<div class="a" style="left:876px;top:241px;width:1px;height:3px;background:#fff"></div>
<svg class="a" style="left:874px;top:240px;overflow:visible" width="56" height="17"><text x="1" y="13" textLength="53" lengthAdjust="spacingAndGlyphs" font-family="Liberation Sans" font-size="9.9" font-weight="normal" fill="#fff" xml:space="preserve">9 May 08:00</text></svg>
<div class="a" style="left:940px;top:241px;width:1px;height:3px;background:#fff"></div>
<svg class="a" style="left:938px;top:240px;overflow:visible" width="61" height="17"><text x="1" y="13" textLength="58" lengthAdjust="spacingAndGlyphs" font-family="Liberation Sans" font-size="9.9" font-weight="normal" fill="#fff" xml:space="preserve">10 May 00:00</text></svg>
<div class="a" style="left:1243px;top:110px;width:2px;height:1px;background:#fff"></div>
<svg class="a" style="left:1248px;top:100px;overflow:visible" width="35" height="17"><text x="1" y="13" textLength="32" lengthAdjust="spacingAndGlyphs" font-family="Liberation Sans" font-size="9.9" font-weight="normal" fill="#fff" xml:space="preserve">1.66810</text></svg>
<div class="a" style="left:1243px;top:142px;width:2px;height:1px;background:#fff"></div>
<svg class="a" style="left:1248px;top:132px;overflow:visible" width="35" height="17"><text x="1" y="13" textLength="32" lengthAdjust="spacingAndGlyphs" font-family="Liberation Sans" font-size="9.9" font-weight="normal" fill="#fff" xml:space="preserve">1.65760</text></svg>
<div class="a" style="left:1243px;top:174px;width:2px;height:1px;background:#fff"></div>
<svg class="a" style="left:1248px;top:164px;overflow:visible" width="35" height="17"><text x="1" y="13" textLength="32" lengthAdjust="spacingAndGlyphs" font-family="Liberation Sans" font-size="9.9" font-weight="normal" fill="#fff" xml:space="preserve">1.64710</text></svg>
<div class="a" style="left:1243px;top:206px;width:2px;height:1px;background:#fff"></div>
<svg class="a" style="left:1248px;top:196px;overflow:visible" width="35" height="17"><text x="1" y="13" textLength="32" lengthAdjust="spacingAndGlyphs" font-family="Liberation Sans" font-size="9.9" font-weight="normal" fill="#fff" xml:space="preserve">1.63660</text></svg>
<div class="a" style="left:1243px;top:238px;width:2px;height:1px;background:#fff"></div>
<svg class="a" style="left:1248px;top:228px;overflow:visible" width="35" height="17"><text x="1" y="13" textLength="32" lengthAdjust="spacingAndGlyphs" font-family="Liberation Sans" font-size="9.9" font-weight="normal" fill="#fff" xml:space="preserve">1.62640</text></svg>
<div class="a" style="left:1245px;top:210px;width:37px;height:11px;background:#fff"></div>
<svg class="a" style="left:1248px;top:206px;overflow:visible" width="35" height="17"><text x="1" y="13" textLength="32" lengthAdjust="spacingAndGlyphs" font-family="Liberation Sans" font-size="9.9" font-weight="normal" fill="#000" xml:space="preserve">1.63360</text></svg>
<svg class="a" style="left:1006px;top:211px;overflow:visible" width="44" height="17"><text x="1" y="13" textLength="41" lengthAdjust="spacingAndGlyphs" font-family="Liberation Sans" font-size="9.9" font-weight="normal" fill="#fff" xml:space="preserve">&lt;0:29:39</text></svg>
<svg class="a" style="left:996px;top:82px" width="10" height="6"><path d="M0 0h9l-4.5 5z" fill="#778899"/></svg>
<svg class="a" style="left:44px;top:234px" width="6" height="6"><path d="M0 0v6h6z" fill="#778899"/></svg>
<svg class="a" style="left:0;top:0" width="1288" height="262">
<rect x="44" y="216" width="1198" height="1" fill="#778899"/>
<rect x="44" y="171" width="1" height="6" fill="#0000ff"/><rect x="43" y="172" width="3" height="5" fill="#0000ff"/><rect x="48" y="166" width="1" height="8" fill="#0000ff"/><rect x="47" y="169" width="3" height="4" fill="#0000ff"/><rect x="52" y="168" width="1" height="7" fill="#ff0000"/><rect x="51" y="169" width="3" height="5" fill="#ff0000"/><rect x="56" y="171" width="1" height="4" fill="#ff0000"/><rect x="55" y="173" width="3" height="1" fill="#ff0000"/><rect x="60" y="171" width="1" height="4" fill="#0000ff"/><rect x="59" y="172" width="3" height="2" fill="#0000ff"/><rect x="64" y="169" width="1" height="6" fill="#0000ff"/><rect x="63" y="170" width="3" height="3" fill="#0000ff"/><rect x="68" y="160" width="1" height="14" fill="#0000ff"/><rect x="67" y="160" width="3" height="11" fill="#0000ff"/><rect x="72" y="160" width="1" height="6" fill="#ff0000"/><rect x="71" y="161" width="3" height="3" fill="#ff0000"/><rect x="76" y="161" width="1" height="6" fill="#0000ff"/><rect x="75" y="162" width="3" height="1" fill="#0000ff"/><rect x="80" y="158" width="1" height="13" fill="#ff0000"/><rect x="79" y="162" width="3" height="7" fill="#ff0000"/><rect x="84" y="166" width="1" height="8" fill="#0000ff"/><rect x="83" y="167" width="3" height="1" fill="#0000ff"/><rect x="88" y="164" width="1" height="8" fill="#0000ff"/><rect x="87" y="165" width="3" height="3" fill="#0000ff"/><rect x="92" y="161" width="1" height="7" fill="#0000ff"/><rect x="91" y="161" width="3" height="5" fill="#0000ff"/><rect x="96" y="161" width="1" height="8" fill="#ff0000"/><rect x="95" y="161" width="3" height="7" fill="#ff0000"/><rect x="100" y="165" width="1" height="11" fill="#ff0000"/><rect x="99" y="167" width="3" height="9" fill="#ff0000"/><rect x="104" y="171" width="1" height="13" fill="#ff0000"/><rect x="103" y="176" width="3" height="8" fill="#ff0000"/><rect x="108" y="145" width="1" height="41" fill="#0000ff"/><rect x="107" y="146" width="3" height="38" fill="#0000ff"/><rect x="112" y="140" width="1" height="8" fill="#ff0000"/><rect x="111" y="145" width="3" height="3" fill="#ff0000"/><rect x="116" y="141" width="1" height="8" fill="#0000ff"/><rect x="115" y="141" width="3" height="7" fill="#0000ff"/><rect x="120" y="141" width="1" height="11" fill="#ff0000"/><rect x="119" y="141" width="3" height="11" fill="#ff0000"/><rect x="124" y="144" width="1" height="12" fill="#0000ff"/><rect x="123" y="145" width="3" height="8" fill="#0000ff"/><rect x="128" y="143" width="1" height="7" fill="#ff0000"/><rect x="127" y="146" width="3" height="3" fill="#ff0000"/><rect x="132" y="146" width="1" height="14" fill="#ff0000"/><rect x="131" y="148" width="3" height="12" fill="#ff0000"/><rect x="136" y="153" width="1" height="8" fill="#0000ff"/><rect x="135" y="156" width="3" height="4" fill="#0000ff"/><rect x="140" y="148" width="1" height="18" fill="#0000ff"/><rect x="139" y="152" width="3" height="6" fill="#0000ff"/><rect x="144" y="144" width="1" height="10" fill="#0000ff"/><rect x="143" y="148" width="3" height="3" fill="#0000ff"/><rect x="148" y="141" width="1" height="12" fill="#0000ff"/><rect x="147" y="142" width="3" height="6" fill="#0000ff"/><rect x="152" y="124" width="1" height="20" fill="#0000ff"/><rect x="151" y="124" width="3" height="19" fill="#0000ff"/><rect x="156" y="123" width="1" height="5" fill="#ff0000"/><rect x="155" y="124" width="3" height="4" fill="#ff0000"/><rect x="160" y="125" width="1" height="3" fill="#ff0000"/><rect x="159" y="127" width="3" height="1" fill="#ff0000"/><rect x="164" y="126" width="1" height="2" fill="#0000ff"/><rect x="163" y="126" width="3" height="2" fill="#0000ff"/><rect x="168" y="114" width="1" height="15" fill="#0000ff"/><rect x="167" y="120" width="3" height="7" fill="#0000ff"/><rect x="172" y="107" width="1" height="15" fill="#0000ff"/><rect x="171" y="108" width="3" height="14" fill="#0000ff"/><rect x="176" y="103" width="1" height="7" fill="#0000ff"/><rect x="175" y="107" width="3" height="2" fill="#0000ff"/><rect x="180" y="95" width="1" height="15" fill="#0000ff"/><rect x="179" y="96" width="3" height="13" fill="#0000ff"/><rect x="184" y="95" width="1" height="4" fill="#ff0000"/><rect x="183" y="95" width="3" height="3" fill="#ff0000"/><rect x="188" y="95" width="1" height="5" fill="#ff0000"/><rect x="187" y="95" width="3" height="3" fill="#ff0000"/><rect x="192" y="95" width="1" height="7" fill="#ff0000"/><rect x="191" y="96" width="3" height="4" fill="#ff0000"/><rect x="196" y="95" width="1" height="12" fill="#ff0000"/><rect x="195" y="96" width="3" height="3" fill="#ff0000"/><rect x="200" y="100" width="1" height="15" fill="#ff0000"/><rect x="199" y="102" width="3" height="11" fill="#ff0000"/><rect x="204" y="107" width="1" height="6" fill="#0000ff"/><rect x="203" y="110" width="3" height="3" fill="#0000ff"/><rect x="208" y="110" width="1" height="10" fill="#ff0000"/><rect x="207" y="111" width="3" height="5" fill="#ff0000"/><rect x="212" y="113" width="1" height="7" fill="#ff0000"/><rect x="211" y="114" width="3" height="5" fill="#ff0000"/><rect x="216" y="115" width="1" height="10" fill="#ff0000"/><rect x="215" y="117" width="3" height="5" fill="#ff0000"/><rect x="220" y="112" width="1" height="14" fill="#0000ff"/><rect x="219" y="112" width="3" height="9" fill="#0000ff"/><rect x="224" y="106" width="1" height="17" fill="#0000ff"/><rect x="223" y="106" width="3" height="7" fill="#0000ff"/><rect x="228" y="104" width="1" height="19" fill="#ff0000"/><rect x="227" y="107" width="3" height="14" fill="#ff0000"/><rect x="232" y="114" width="1" height="12" fill="#ff0000"/><rect x="231" y="120" width="3" height="5" fill="#ff0000"/><rect x="236" y="121" width="1" height="7" fill="#0000ff"/><rect x="235" y="123" width="3" height="2" fill="#0000ff"/><rect x="240" y="120" width="1" height="6" fill="#0000ff"/><rect x="239" y="120" width="3" height="4" fill="#0000ff"/><rect x="244" y="118" width="1" height="5" fill="#ff0000"/><rect x="243" y="120" width="3" height="3" fill="#ff0000"/><rect x="248" y="119" width="1" height="5" fill="#ff0000"/><rect x="247" y="122" width="3" height="1" fill="#ff0000"/><rect x="252" y="123" width="1" height="4" fill="#ff0000"/><rect x="251" y="123" width="3" height="3" fill="#ff0000"/><rect x="256" y="123" width="1" height="5" fill="#0000ff"/><rect x="255" y="123" width="3" height="4" fill="#0000ff"/><rect x="260" y="120" width="1" height="5" fill="#0000ff"/><rect x="259" y="120" width="3" height="4" fill="#0000ff"/><rect x="264" y="120" width="1" height="3" fill="#ff0000"/><rect x="263" y="120" width="3" height="2" fill="#ff0000"/><rect x="268" y="119" width="1" height="6" fill="#ff0000"/><rect x="267" y="121" width="3" height="4" fill="#ff0000"/><rect x="272" y="122" width="1" height="6" fill="#0000ff"/><rect x="271" y="123" width="3" height="2" fill="#0000ff"/><rect x="276" y="120" width="1" height="5" fill="#0000ff"/><rect x="275" y="120" width="3" height="5" fill="#0000ff"/><rect x="280" y="117" width="1" height="5" fill="#0000ff"/><rect x="279" y="117" width="3" height="4" fill="#0000ff"/><rect x="284" y="115" width="1" height="4" fill="#ff0000"/><rect x="283" y="118" width="3" height="1" fill="#ff0000"/><rect x="288" y="115" width="1" height="5" fill="#0000ff"/><rect x="287" y="116" width="3" height="3" fill="#0000ff"/><rect x="292" y="114" width="1" height="8" fill="#ff0000"/><rect x="291" y="115" width="3" height="6" fill="#ff0000"/><rect x="296" y="112" width="1" height="10" fill="#0000ff"/><rect x="295" y="113" width="3" height="8" fill="#0000ff"/><rect x="300" y="108" width="1" height="9" fill="#0000ff"/><rect x="299" y="108" width="3" height="7" fill="#0000ff"/><rect x="304" y="107" width="1" height="17" fill="#ff0000"/><rect x="303" y="108" width="3" height="16" fill="#ff0000"/><rect x="308" y="116" width="1" height="8" fill="#0000ff"/><rect x="307" y="119" width="3" height="5" fill="#0000ff"/><rect x="312" y="111" width="1" height="9" fill="#0000ff"/><rect x="311" y="112" width="3" height="7" fill="#0000ff"/><rect x="316" y="111" width="1" height="14" fill="#ff0000"/><rect x="315" y="111" width="3" height="10" fill="#ff0000"/><rect x="320" y="116" width="1" height="11" fill="#ff0000"/><rect x="319" y="120" width="3" height="7" fill="#ff0000"/><rect x="324" y="110" width="1" height="18" fill="#0000ff"/><rect x="323" y="110" width="3" height="16" fill="#0000ff"/><rect x="328" y="107" width="1" height="6" fill="#0000ff"/><rect x="327" y="107" width="3" height="5" fill="#0000ff"/><rect x="332" y="101" width="1" height="7" fill="#0000ff"/><rect x="331" y="106" width="3" height="2" fill="#0000ff"/><rect x="336" y="99" width="1" height="8" fill="#0000ff"/><rect x="335" y="102" width="3" height="5" fill="#0000ff"/><rect x="340" y="97" width="1" height="6" fill="#0000ff"/><rect x="339" y="101" width="3" height="2" fill="#0000ff"/><rect x="344" y="99" width="1" height="6" fill="#ff0000"/><rect x="343" y="101" width="3" height="3" fill="#ff0000"/><rect x="348" y="95" width="1" height="10" fill="#ff0000"/><rect x="347" y="101" width="3" height="2" fill="#ff0000"/><rect x="352" y="96" width="1" height="8" fill="#0000ff"/><rect x="351" y="98" width="3" height="5" fill="#0000ff"/><rect x="356" y="98" width="1" height="16" fill="#ff0000"/><rect x="355" y="98" width="3" height="6" fill="#ff0000"/><rect x="360" y="104" width="1" height="3" fill="#ff0000"/><rect x="359" y="104" width="3" height="3" fill="#ff0000"/><rect x="364" y="92" width="1" height="17" fill="#0000ff"/><rect x="363" y="98" width="3" height="8" fill="#0000ff"/><rect x="368" y="96" width="1" height="12" fill="#ff0000"/><rect x="367" y="98" width="3" height="9" fill="#ff0000"/><rect x="372" y="104" width="1" height="14" fill="#ff0000"/><rect x="371" y="106" width="3" height="7" fill="#ff0000"/><rect x="376" y="110" width="1" height="8" fill="#0000ff"/><rect x="375" y="112" width="3" height="1" fill="#0000ff"/><rect x="380" y="110" width="1" height="13" fill="#ff0000"/><rect x="379" y="112" width="3" height="7" fill="#ff0000"/><rect x="384" y="112" width="1" height="9" fill="#0000ff"/><rect x="383" y="113" width="3" height="6" fill="#0000ff"/><rect x="388" y="108" width="1" height="5" fill="#0000ff"/><rect x="387" y="110" width="3" height="3" fill="#0000ff"/><rect x="392" y="107" width="1" height="8" fill="#0000ff"/><rect x="391" y="110" width="3" height="1" fill="#0000ff"/><rect x="396" y="105" width="1" height="10" fill="#ff0000"/><rect x="395" y="110" width="3" height="5" fill="#ff0000"/><rect x="400" y="110" width="1" height="7" fill="#0000ff"/><rect x="399" y="112" width="3" height="3" fill="#0000ff"/><rect x="404" y="107" width="1" height="7" fill="#0000ff"/><rect x="403" y="109" width="3" height="4" fill="#0000ff"/><rect x="408" y="103" width="1" height="8" fill="#0000ff"/><rect x="407" y="108" width="3" height="2" fill="#0000ff"/><rect x="412" y="106" width="1" height="11" fill="#ff0000"/><rect x="411" y="108" width="3" height="7" fill="#ff0000"/><rect x="416" y="109" width="1" height="6" fill="#0000ff"/><rect x="415" y="113" width="3" height="1" fill="#0000ff"/><rect x="420" y="101" width="1" height="13" fill="#0000ff"/><rect x="419" y="103" width="3" height="10" fill="#0000ff"/><rect x="424" y="97" width="1" height="12" fill="#ff0000"/><rect x="423" y="103" width="3" height="5" fill="#ff0000"/><rect x="428" y="106" width="1" height="6" fill="#ff0000"/><rect x="427" y="107" width="3" height="3" fill="#ff0000"/><rect x="432" y="107" width="1" height="3" fill="#0000ff"/><rect x="431" y="107" width="3" height="2" fill="#0000ff"/><rect x="436" y="107" width="1" height="4" fill="#ff0000"/><rect x="435" y="108" width="3" height="3" fill="#ff0000"/><rect x="440" y="109" width="1" height="13" fill="#ff0000"/><rect x="439" y="109" width="3" height="10" fill="#ff0000"/><rect x="444" y="117" width="1" height="8" fill="#ff0000"/><rect x="443" y="118" width="3" height="1" fill="#ff0000"/><rect x="448" y="119" width="1" height="4" fill="#ff0000"/><rect x="447" y="119" width="3" height="2" fill="#ff0000"/><rect x="452" y="117" width="1" height="4" fill="#0000ff"/><rect x="451" y="117" width="3" height="3" fill="#0000ff"/><rect x="456" y="116" width="1" height="7" fill="#ff0000"/><rect x="455" y="117" width="3" height="5" fill="#ff0000"/><rect x="460" y="121" width="1" height="12" fill="#ff0000"/><rect x="459" y="122" width="3" height="8" fill="#ff0000"/><rect x="464" y="128" width="1" height="9" fill="#ff0000"/><rect x="463" y="129" width="3" height="8" fill="#ff0000"/><rect x="468" y="129" width="1" height="11" fill="#0000ff"/><rect x="467" y="132" width="3" height="4" fill="#0000ff"/><rect x="472" y="129" width="1" height="5" fill="#0000ff"/><rect x="471" y="130" width="3" height="3" fill="#0000ff"/><rect x="476" y="125" width="1" height="7" fill="#0000ff"/><rect x="475" y="125" width="3" height="5" fill="#0000ff"/><rect x="480" y="120" width="1" height="11" fill="#0000ff"/><rect x="479" y="123" width="3" height="3" fill="#0000ff"/><rect x="484" y="123" width="1" height="10" fill="#ff0000"/><rect x="483" y="123" width="3" height="10" fill="#ff0000"/><rect x="488" y="132" width="1" height="14" fill="#ff0000"/><rect x="487" y="132" width="3" height="9" fill="#ff0000"/><rect x="492" y="140" width="1" height="32" fill="#ff0000"/><rect x="491" y="140" width="3" height="27" fill="#ff0000"/><rect x="496" y="164" width="1" height="10" fill="#ff0000"/><rect x="495" y="166" width="3" height="3" fill="#ff0000"/><rect x="500" y="167" width="1" height="9" fill="#ff0000"/><rect x="499" y="167" width="3" height="5" fill="#ff0000"/><rect x="504" y="165" width="1" height="11" fill="#ff0000"/><rect x="503" y="171" width="3" height="1" fill="#ff0000"/><rect x="508" y="167" width="1" height="9" fill="#0000ff"/><rect x="507" y="168" width="3" height="4" fill="#0000ff"/><rect x="512" y="164" width="1" height="9" fill="#ff0000"/><rect x="511" y="168" width="3" height="4" fill="#ff0000"/><rect x="516" y="167" width="1" height="7" fill="#0000ff"/><rect x="515" y="168" width="3" height="4" fill="#0000ff"/><rect x="520" y="150" width="1" height="23" fill="#0000ff"/><rect x="519" y="155" width="3" height="15" fill="#0000ff"/><rect x="524" y="153" width="1" height="6" fill="#ff0000"/><rect x="523" y="155" width="3" height="3" fill="#ff0000"/><rect x="528" y="156" width="1" height="14" fill="#ff0000"/><rect x="527" y="157" width="3" height="11" fill="#ff0000"/><rect x="532" y="165" width="1" height="12" fill="#ff0000"/><rect x="531" y="166" width="3" height="10" fill="#ff0000"/><rect x="536" y="169" width="1" height="8" fill="#0000ff"/><rect x="535" y="174" width="3" height="2" fill="#0000ff"/><rect x="540" y="170" width="1" height="5" fill="#0000ff"/><rect x="539" y="170" width="3" height="5" fill="#0000ff"/><rect x="544" y="168" width="1" height="5" fill="#ff0000"/><rect x="543" y="169" width="3" height="3" fill="#ff0000"/><rect x="548" y="167" width="1" height="7" fill="#0000ff"/><rect x="547" y="167" width="3" height="5" fill="#0000ff"/><rect x="552" y="167" width="1" height="6" fill="#ff0000"/><rect x="551" y="167" width="3" height="3" fill="#ff0000"/><rect x="556" y="168" width="1" height="6" fill="#ff0000"/><rect x="555" y="168" width="3" height="3" fill="#ff0000"/><rect x="560" y="169" width="1" height="11" fill="#ff0000"/><rect x="559" y="170" width="3" height="9" fill="#ff0000"/><rect x="564" y="175" width="1" height="4" fill="#0000ff"/><rect x="563" y="177" width="3" height="1" fill="#0000ff"/><rect x="568" y="175" width="1" height="3" fill="#0000ff"/><rect x="567" y="176" width="3" height="2" fill="#0000ff"/><rect x="572" y="174" width="1" height="5" fill="#ff0000"/><rect x="571" y="176" width="3" height="2" fill="#ff0000"/><rect x="576" y="171" width="1" height="7" fill="#0000ff"/><rect x="575" y="173" width="3" height="5" fill="#0000ff"/><rect x="580" y="171" width="1" height="10" fill="#0000ff"/><rect x="579" y="172" width="3" height="1" fill="#0000ff"/><rect x="584" y="158" width="1" height="15" fill="#0000ff"/><rect x="583" y="168" width="3" height="5" fill="#0000ff"/><rect x="588" y="161" width="1" height="18" fill="#ff0000"/><rect x="587" y="168" width="3" height="2" fill="#ff0000"/><rect x="592" y="155" width="1" height="16" fill="#0000ff"/><rect x="591" y="155" width="3" height="15" fill="#0000ff"/><rect x="596" y="152" width="1" height="15" fill="#ff0000"/><rect x="595" y="155" width="3" height="8" fill="#ff0000"/><rect x="600" y="157" width="1" height="8" fill="#0000ff"/><rect x="599" y="159" width="3" height="4" fill="#0000ff"/><rect x="604" y="149" width="1" height="13" fill="#0000ff"/><rect x="603" y="153" width="3" height="7" fill="#0000ff"/><rect x="608" y="143" width="1" height="12" fill="#0000ff"/><rect x="607" y="145" width="3" height="9" fill="#0000ff"/><rect x="612" y="143" width="1" height="21" fill="#ff0000"/><rect x="611" y="145" width="3" height="8" fill="#ff0000"/><rect x="616" y="150" width="1" height="12" fill="#ff0000"/><rect x="615" y="153" width="3" height="7" fill="#ff0000"/><rect x="620" y="156" width="1" height="11" fill="#ff0000"/><rect x="619" y="159" width="3" height="2" fill="#ff0000"/><rect x="624" y="157" width="1" height="7" fill="#0000ff"/><rect x="623" y="158" width="3" height="3" fill="#0000ff"/><rect x="628" y="156" width="1" height="6" fill="#ff0000"/><rect x="627" y="158" width="3" height="3" fill="#ff0000"/><rect x="632" y="160" width="1" height="8" fill="#ff0000"/><rect x="631" y="160" width="3" height="7" fill="#ff0000"/><rect x="636" y="164" width="1" height="6" fill="#ff0000"/><rect x="635" y="165" width="3" height="5" fill="#ff0000"/><rect x="640" y="166" width="1" height="7" fill="#0000ff"/><rect x="639" y="168" width="3" height="2" fill="#0000ff"/><rect x="644" y="166" width="1" height="3" fill="#0000ff"/><rect x="643" y="167" width="3" height="1" fill="#0000ff"/><rect x="648" y="165" width="1" height="6" fill="#ff0000"/><rect x="647" y="167" width="3" height="3" fill="#ff0000"/><rect x="652" y="164" width="1" height="8" fill="#0000ff"/><rect x="651" y="165" width="3" height="5" fill="#0000ff"/><rect x="656" y="162" width="1" height="7" fill="#0000ff"/><rect x="655" y="162" width="3" height="4" fill="#0000ff"/><rect x="660" y="159" width="1" height="7" fill="#ff0000"/><rect x="659" y="162" width="3" height="4" fill="#ff0000"/><rect x="664" y="159" width="1" height="8" fill="#0000ff"/><rect x="663" y="159" width="3" height="7" fill="#0000ff"/><rect x="668" y="157" width="1" height="5" fill="#ff0000"/><rect x="667" y="159" width="3" height="2" fill="#ff0000"/><rect x="672" y="157" width="1" height="5" fill="#0000ff"/><rect x="671" y="158" width="3" height="2" fill="#0000ff"/><rect x="676" y="152" width="1" height="12" fill="#0000ff"/><rect x="675" y="154" width="3" height="5" fill="#0000ff"/><rect x="680" y="152" width="1" height="7" fill="#ff0000"/><rect x="679" y="153" width="3" height="2" fill="#ff0000"/><rect x="684" y="155" width="1" height="25" fill="#ff0000"/><rect x="683" y="155" width="3" height="18" fill="#ff0000"/><rect x="688" y="168" width="1" height="9" fill="#0000ff"/><rect x="687" y="172" width="3" height="1" fill="#0000ff"/><rect x="692" y="160" width="1" height="19" fill="#0000ff"/><rect x="691" y="165" width="3" height="8" fill="#0000ff"/><rect x="696" y="161" width="1" height="10" fill="#0000ff"/><rect x="695" y="161" width="3" height="5" fill="#0000ff"/><rect x="700" y="160" width="1" height="24" fill="#ff0000"/><rect x="699" y="161" width="3" height="18" fill="#ff0000"/><rect x="704" y="174" width="1" height="10" fill="#0000ff"/><rect x="703" y="174" width="3" height="6" fill="#0000ff"/><rect x="708" y="173" width="1" height="22" fill="#ff0000"/><rect x="707" y="174" width="3" height="18" fill="#ff0000"/><rect x="712" y="183" width="1" height="13" fill="#0000ff"/><rect x="711" y="188" width="3" height="4" fill="#0000ff"/><rect x="716" y="184" width="1" height="7" fill="#0000ff"/><rect x="715" y="188" width="3" height="2" fill="#0000ff"/><rect x="720" y="187" width="1" height="5" fill="#ff0000"/><rect x="719" y="188" width="3" height="3" fill="#ff0000"/><rect x="724" y="189" width="1" height="16" fill="#ff0000"/><rect x="723" y="190" width="3" height="14" fill="#ff0000"/><rect x="728" y="197" width="1" height="13" fill="#ff0000"/><rect x="727" y="203" width="3" height="2" fill="#ff0000"/><rect x="732" y="198" width="1" height="7" fill="#0000ff"/><rect x="731" y="201" width="3" height="4" fill="#0000ff"/><rect x="736" y="197" width="1" height="6" fill="#0000ff"/><rect x="735" y="199" width="3" height="3" fill="#0000ff"/><rect x="740" y="198" width="1" height="5" fill="#ff0000"/><rect x="739" y="199" width="3" height="3" fill="#ff0000"/><rect x="744" y="194" width="1" height="9" fill="#0000ff"/><rect x="743" y="196" width="3" height="6" fill="#0000ff"/><rect x="748" y="190" width="1" height="9" fill="#0000ff"/><rect x="747" y="191" width="3" height="6" fill="#0000ff"/><rect x="752" y="186" width="1" height="9" fill="#ff0000"/><rect x="751" y="192" width="3" height="1" fill="#ff0000"/><rect x="756" y="189" width="1" height="8" fill="#ff0000"/><rect x="755" y="192" width="3" height="3" fill="#ff0000"/><rect x="760" y="194" width="1" height="8" fill="#ff0000"/><rect x="759" y="194" width="3" height="6" fill="#ff0000"/><rect x="764" y="198" width="1" height="4" fill="#ff0000"/><rect x="763" y="199" width="3" height="2" fill="#ff0000"/><rect x="768" y="193" width="1" height="8" fill="#0000ff"/><rect x="767" y="198" width="3" height="3" fill="#0000ff"/><rect x="772" y="193" width="1" height="7" fill="#0000ff"/><rect x="771" y="195" width="3" height="4" fill="#0000ff"/><rect x="776" y="193" width="1" height="18" fill="#ff0000"/><rect x="775" y="195" width="3" height="11" fill="#ff0000"/><rect x="780" y="197" width="1" height="14" fill="#0000ff"/><rect x="779" y="203" width="3" height="3" fill="#0000ff"/><rect x="784" y="196" width="1" height="12" fill="#0000ff"/><rect x="783" y="201" width="3" height="3" fill="#0000ff"/><rect x="788" y="187" width="1" height="15" fill="#0000ff"/><rect x="787" y="187" width="3" height="15" fill="#0000ff"/><rect x="792" y="185" width="1" height="8" fill="#ff0000"/><rect x="791" y="187" width="3" height="4" fill="#ff0000"/><rect x="796" y="185" width="1" height="21" fill="#0000ff"/><rect x="795" y="188" width="3" height="3" fill="#0000ff"/><rect x="800" y="177" width="1" height="15" fill="#0000ff"/><rect x="799" y="186" width="3" height="3" fill="#0000ff"/><rect x="804" y="180" width="1" height="13" fill="#ff0000"/><rect x="803" y="186" width="3" height="4" fill="#ff0000"/><rect x="808" y="183" width="1" height="13" fill="#ff0000"/><rect x="807" y="189" width="3" height="4" fill="#ff0000"/><rect x="812" y="190" width="1" height="13" fill="#ff0000"/><rect x="811" y="191" width="3" height="10" fill="#ff0000"/><rect x="816" y="193" width="1" height="11" fill="#0000ff"/><rect x="815" y="198" width="3" height="3" fill="#0000ff"/><rect x="820" y="196" width="1" height="15" fill="#ff0000"/><rect x="819" y="196" width="3" height="12" fill="#ff0000"/><rect x="824" y="196" width="1" height="12" fill="#0000ff"/><rect x="823" y="196" width="3" height="11" fill="#0000ff"/><rect x="828" y="202" width="1" height="6" fill="#0000ff"/><rect x="827" y="204" width="3" height="2" fill="#0000ff"/><rect x="832" y="201" width="1" height="6" fill="#ff0000"/><rect x="831" y="204" width="3" height="3" fill="#ff0000"/><rect x="836" y="200" width="1" height="15" fill="#0000ff"/><rect x="835" y="202" width="3" height="5" fill="#0000ff"/><rect x="840" y="202" width="1" height="5" fill="#ff0000"/><rect x="839" y="203" width="3" height="3" fill="#ff0000"/><rect x="844" y="199" width="1" height="7" fill="#0000ff"/><rect x="843" y="203" width="3" height="3" fill="#0000ff"/><rect x="848" y="202" width="1" height="8" fill="#0000ff"/><rect x="847" y="203" width="3" height="1" fill="#0000ff"/><rect x="852" y="199" width="1" height="5" fill="#0000ff"/><rect x="851" y="201" width="3" height="3" fill="#0000ff"/><rect x="856" y="196" width="1" height="7" fill="#0000ff"/><rect x="855" y="198" width="3" height="5" fill="#0000ff"/><rect x="860" y="198" width="1" height="4" fill="#ff0000"/><rect x="859" y="198" width="3" height="2" fill="#ff0000"/><rect x="864" y="195" width="1" height="8" fill="#0000ff"/><rect x="863" y="196" width="3" height="4" fill="#0000ff"/><rect x="868" y="194" width="1" height="14" fill="#ff0000"/><rect x="867" y="197" width="3" height="6" fill="#ff0000"/><rect x="872" y="194" width="1" height="11" fill="#0000ff"/><rect x="871" y="200" width="3" height="2" fill="#0000ff"/><rect x="876" y="196" width="1" height="12" fill="#ff0000"/><rect x="875" y="200" width="3" height="8" fill="#ff0000"/><rect x="880" y="202" width="1" height="10" fill="#0000ff"/><rect x="879" y="203" width="3" height="4" fill="#0000ff"/><rect x="884" y="201" width="1" height="11" fill="#ff0000"/><rect x="883" y="203" width="3" height="4" fill="#ff0000"/><rect x="888" y="200" width="1" height="8" fill="#0000ff"/><rect x="887" y="205" width="3" height="2" fill="#0000ff"/><rect x="892" y="202" width="1" height="21" fill="#ff0000"/><rect x="891" y="206" width="3" height="13" fill="#ff0000"/><rect x="896" y="216" width="1" height="11" fill="#ff0000"/><rect x="895" y="218" width="3" height="7" fill="#ff0000"/><rect x="900" y="222" width="1" height="15" fill="#ff0000"/><rect x="899" y="224" width="3" height="3" fill="#ff0000"/><rect x="904" y="212" width="1" height="15" fill="#0000ff"/><rect x="903" y="215" width="3" height="12" fill="#0000ff"/><rect x="908" y="211" width="1" height="6" fill="#0000ff"/><rect x="907" y="213" width="3" height="3" fill="#0000ff"/><rect x="912" y="206" width="1" height="9" fill="#0000ff"/><rect x="911" y="206" width="3" height="9" fill="#0000ff"/><rect x="916" y="196" width="1" height="12" fill="#0000ff"/><rect x="915" y="200" width="3" height="7" fill="#0000ff"/><rect x="920" y="197" width="1" height="5" fill="#0000ff"/><rect x="919" y="198" width="3" height="3" fill="#0000ff"/><rect x="924" y="194" width="1" height="5" fill="#0000ff"/><rect x="923" y="195" width="3" height="3" fill="#0000ff"/><rect x="928" y="195" width="1" height="6" fill="#ff0000"/><rect x="927" y="195" width="3" height="4" fill="#ff0000"/><rect x="932" y="192" width="1" height="10" fill="#0000ff"/><rect x="931" y="193" width="3" height="5" fill="#0000ff"/><rect x="936" y="190" width="1" height="7" fill="#ff0000"/><rect x="935" y="193" width="3" height="2" fill="#ff0000"/><rect x="940" y="193" width="1" height="8" fill="#ff0000"/><rect x="939" y="194" width="3" height="4" fill="#ff0000"/><rect x="944" y="191" width="1" height="11" fill="#0000ff"/><rect x="943" y="193" width="3" height="4" fill="#0000ff"/><rect x="948" y="191" width="1" height="6" fill="#ff0000"/><rect x="947" y="193" width="3" height="3" fill="#ff0000"/><rect x="952" y="192" width="1" height="6" fill="#ff0000"/><rect x="951" y="195" width="3" height="3" fill="#ff0000"/><rect x="956" y="195" width="1" height="5" fill="#ff0000"/><rect x="955" y="196" width="3" height="3" fill="#ff0000"/><rect x="960" y="198" width="1" height="11" fill="#ff0000"/><rect x="959" y="198" width="3" height="9" fill="#ff0000"/><rect x="964" y="201" width="1" height="8" fill="#0000ff"/><rect x="963" y="203" width="3" height="3" fill="#0000ff"/><rect x="968" y="199" width="1" height="21" fill="#0000ff"/><rect x="967" y="202" width="3" height="2" fill="#0000ff"/><rect x="972" y="201" width="1" height="10" fill="#ff0000"/><rect x="971" y="202" width="3" height="4" fill="#ff0000"/><rect x="976" y="202" width="1" height="12" fill="#ff0000"/><rect x="975" y="205" width="3" height="6" fill="#ff0000"/><rect x="980" y="206" width="1" height="11" fill="#ff0000"/><rect x="979" y="210" width="3" height="7" fill="#ff0000"/><rect x="984" y="208" width="1" height="10" fill="#0000ff"/><rect x="983" y="210" width="3" height="7" fill="#0000ff"/><rect x="988" y="201" width="1" height="12" fill="#0000ff"/><rect x="987" y="207" width="3" height="4" fill="#0000ff"/><rect x="992" y="206" width="1" height="15" fill="#ff0000"/><rect x="991" y="207" width="3" height="10" fill="#ff0000"/><rect x="996" y="205" width="1" height="10" fill="#0000ff"/><rect x="995" y="212" width="3" height="1" fill="#0000ff"/><rect x="1000" y="207" width="1" height="10" fill="#ff0000"/><rect x="999" y="212" width="3" height="5" fill="#ff0000"/>
<rect x="43.5" y="81.5" width="1199" height="159" fill="none" stroke="#fff"/>
</svg>
<div class="a" style="left:40px;top:258px;width:1244px;height:2px;background:#fff"></div>
<div class="a" style="left:39px;top:260px;width:1245px;height:1px;background:#000"></div>
<div class="a" style="left:40px;top:261px;width:1px;height:18px;background:#716f64"></div>
<svg class="a" style="left:52px;top:259px;overflow:visible" width="60" height="18"><text x="1" y="14" textLength="57" lengthAdjust="spacingAndGlyphs" font-family="Liberation Sans" font-size="11" font-weight="normal" fill="#7d7b6e" xml:space="preserve">EURUSD,H1</text></svg>
<div class="a" style="left:123px;top:263px;width:1px;height:13px;background:#716f64"></div>
<svg class="a" style="left:133px;top:259px;overflow:visible" width="59" height="18"><text x="1" y="14" textLength="56" lengthAdjust="spacingAndGlyphs" font-family="Liberation Sans" font-size="11" font-weight="normal" fill="#7d7b6e" xml:space="preserve">GBPUSD,H1</text></svg>
<div class="a" style="left:203px;top:263px;width:1px;height:13px;background:#716f64"></div>
<svg class="a" style="left:213px;top:259px;overflow:visible" width="55" height="18"><text x="1" y="14" textLength="52" lengthAdjust="spacingAndGlyphs" font-family="Liberation Sans" font-size="11" font-weight="normal" fill="#7d7b6e" xml:space="preserve">GBPJPY,H1</text></svg>
<div class="a" style="left:279px;top:260px;width:80px;height:18px;background:#fff;border-left:1px solid #000;border-right:1px solid #000;border-bottom:1px solid #000;box-shadow:1px 1px 0 #808080"></div>
<svg class="a" style="left:290px;top:259px;overflow:visible" width="58" height="18"><text x="1" y="14" textLength="55" lengthAdjust="spacingAndGlyphs" font-family="Liberation Sans" font-size="11" font-weight="normal" fill="#000" xml:space="preserve">GBPUSD,H1</text></svg>
<svg class="a" style="left:1254px;top:265px" width="24" height="9"><path d="M4 0v8L0 4z" fill="#aca899"/><path d="M19 0v8l4-4z" fill="#aca899"/></svg>
<div class="a" style="left:4px;top:280px;width:1280px;height:1px;background:#fff"></div>
<div class="a" style="left:19px;top:284px;width:1262px;height:1px;background:#aca899"></div>
<div class="a" style="left:19px;top:284px;width:1px;height:445px;background:#aca899"></div>
<div class="a" style="left:1281px;top:285px;width:1px;height:465px;background:#fff"></div>
<div class="a" style="left:20px;top:285px;width:1243px;height:20px;background:linear-gradient(#ebeadb 0,#ebeadb 17px,#e2decd 17px,#e2decd 18px,#d6d2c2 18px,#d6d2c2 19px,#c9c5b5 19px)"></div>
<div class="t" style="left:29px;top:289px;">Order</div>
<div class="a" style="left:128px;top:288px;width:1px;height:13px;background:#c7c5b2"></div>
<div class="a" style="left:129px;top:288px;width:1px;height:13px;background:#fff"></div>
<div class="r" style="left:128px;top:289px;width:182px">Time</div>
<div class="a" style="left:315px;top:288px;width:1px;height:13px;background:#c7c5b2"></div>
<div class="a" style="left:316px;top:288px;width:1px;height:13px;background:#fff"></div>
<div class="r" style="left:315px;top:289px;width:80px">Type</div>
<div class="a" style="left:400px;top:288px;width:1px;height:13px;background:#c7c5b2"></div>
<div class="a" style="left:401px;top:288px;width:1px;height:13px;background:#fff"></div>
<div class="r" style="left:400px;top:289px;width:63px">Size</div>
<div class="a" style="left:468px;top:288px;width:1px;height:13px;background:#c7c5b2"></div>
<div class="a" style="left:469px;top:288px;width:1px;height:13px;background:#fff"></div>
<div class="r" style="left:468px;top:289px;width:80px">Symbol</div>
<div class="a" style="left:553px;top:288px;width:1px;height:13px;background:#c7c5b2"></div>
<div class="a" style="left:554px;top:288px;width:1px;height:13px;background:#fff"></div>
<div class="r" style="left:553px;top:289px;width:80px">Price</div>
<div class="a" style="left:638px;top:288px;width:1px;height:13px;background:#c7c5b2"></div>
<div class="a" style="left:639px;top:288px;width:1px;height:13px;background:#fff"></div>
<div class="r" style="left:638px;top:289px;width:80px">S / L</div>
<div class="a" style="left:723px;top:288px;width:1px;height:13px;background:#c7c5b2"></div>
<div class="a" style="left:724px;top:288px;width:1px;height:13px;background:#fff"></div>
<div class="r" style="left:723px;top:289px;width:80px">T / P</div>
<div class="a" style="left:808px;top:288px;width:1px;height:13px;background:#c7c5b2"></div>
<div class="a" style="left:809px;top:288px;width:1px;height:13px;background:#fff"></div>
<div class="r" style="left:808px;top:289px;width:166px">Time</div>
<div class="a" style="left:995px;top:288px;width:1px;height:13px;background:#c7c5b2"></div>
<div class="a" style="left:996px;top:288px;width:1px;height:13px;background:#fff"></div>
<div class="r" style="left:995px;top:289px;width:80px">Price</div>
<div class="a" style="left:1080px;top:288px;width:1px;height:13px;background:#c7c5b2"></div>
<div class="a" style="left:1081px;top:288px;width:1px;height:13px;background:#fff"></div>
<div class="r" style="left:1080px;top:289px;width:80px">Swap</div>
<div class="a" style="left:1165px;top:288px;width:1px;height:13px;background:#c7c5b2"></div>
<div class="a" style="left:1166px;top:288px;width:1px;height:13px;background:#fff"></div>
<div class="r" style="left:1165px;top:289px;width:91px">Profit</div>
<div class="a" style="left:1261px;top:288px;width:1px;height:13px;background:#c7c5b2"></div>
<div class="a" style="left:1262px;top:288px;width:1px;height:13px;background:#fff"></div>
<div class="a" style="left:1008px;top:293px;width:1px;height:1px"></div>
<svg class="a" style="left:985px;top:291px" width="10" height="9"><path d="M1.5 7.5L5 0.5" stroke="#aca899" fill="none"/><path d="M5 0.5L8.5 7.5H1.5" stroke="#fff" fill="none"/></svg>
<div class="a" style="left:20px;top:305px;width:1243px;height:20px;background:#ebebeb"></div>
<div class="a" style="left:724px;top:306px;width:84px;height:19px;background:#eee0ee"></div>
<div class="a" style="left:725px;top:306px;width:82px;height:18px;background:#62ed62"></div>
<div class="t" style="left:45px;top:309px;">2354176</div>
<div class="r" style="left:128px;top:309px;width:185px;letter-spacing:0.33px;">2011.04.06 15:00</div>
<div class="r" style="left:315px;top:309px;width:83px;">buy</div>
<div class="r" style="left:400px;top:309px;width:66px;">5.00</div>
<div class="r" style="left:468px;top:309px;width:83px;">gbpusd</div>
<div class="r" style="left:553px;top:309px;width:83px;">1.63185</div>
<div class="r" style="left:638px;top:309px;width:83px;">0.00000</div>
<div class="r" style="left:723px;top:309px;width:83px;">1.63251</div>
<div class="r" style="left:808px;top:309px;width:185px;letter-spacing:0.33px;">2011.04.06 17:18</div>
<div class="r" style="left:995px;top:309px;width:83px;">1.63251</div>
<div class="r" style="left:1080px;top:309px;width:83px;">0.00</div>
<div class="r" style="left:1165px;top:309px;width:94px;">330.00</div>
<svg class="a" style="left:22px;top:307px" width="16" height="17"><path d="M1.5 1.5h8l2.5 2.5v10.5h-10.5z" fill="url(#gd)" stroke="#5a5a5a"/><path d="M9.5 1.5v2.5h2.5" fill="#fff" stroke="#5a5a5a"/><circle cx="11.5" cy="13" r="3.4" fill="url(#gb)" stroke="#1a4fb0" stroke-width="1"/></svg>
<div class="a" style="left:20px;top:325px;width:1243px;height:20px;background:#fff"></div>
<div class="a" style="left:724px;top:326px;width:84px;height:19px;background:#fbf0fb"></div>
<div class="a" style="left:725px;top:326px;width:82px;height:18px;background:#62ed62"></div>
<div class="t" style="left:45px;top:329px;">2362490</div>
<div class="r" style="left:128px;top:329px;width:185px;letter-spacing:0.33px;">2011.04.07 08:00</div>
<div class="r" style="left:315px;top:329px;width:83px;">buy</div>
<div class="r" style="left:400px;top:329px;width:66px;">5.00</div>
<div class="r" style="left:468px;top:329px;width:83px;">gbpusd</div>
<div class="r" style="left:553px;top:329px;width:83px;">1.63303</div>
<div class="r" style="left:638px;top:329px;width:83px;">0.00000</div>
<div class="r" style="left:723px;top:329px;width:83px;">1.63335</div>
<div class="r" style="left:808px;top:329px;width:185px;letter-spacing:0.33px;">2011.04.07 08:17</div>
<div class="r" style="left:995px;top:329px;width:83px;">1.63335</div>
<div class="r" style="left:1080px;top:329px;width:83px;">0.00</div>
<div class="r" style="left:1165px;top:329px;width:94px;">160.00</div>
<svg class="a" style="left:22px;top:327px" width="16" height="17"><path d="M1.5 1.5h8l2.5 2.5v10.5h-10.5z" fill="url(#gd)" stroke="#5a5a5a"/><path d="M9.5 1.5v2.5h2.5" fill="#fff" stroke="#5a5a5a"/><circle cx="11.5" cy="13" r="3.4" fill="url(#gb)" stroke="#1a4fb0" stroke-width="1"/></svg>
<div class="a" style="left:20px;top:345px;width:1243px;height:20px;background:#ebebeb"></div>
<div class="a" style="left:724px;top:346px;width:84px;height:19px;background:#eee0ee"></div>
<div class="a" style="left:725px;top:346px;width:82px;height:18px;background:#62ed62"></div>
<div class="t" style="left:45px;top:349px;">2379407</div>
<div class="r" style="left:128px;top:349px;width:185px;letter-spacing:0.33px;">2011.04.08 08:00</div>
<div class="r" style="left:315px;top:349px;width:83px;">buy</div>
<div class="r" style="left:400px;top:349px;width:66px;">5.00</div>
<div class="r" style="left:468px;top:349px;width:83px;">gbpjpy</div>
<div class="r" style="left:553px;top:349px;width:83px;">139.803</div>
<div class="r" style="left:638px;top:349px;width:83px;">0.000</div>
<div class="r" style="left:723px;top:349px;width:83px;">139.899</div>
<div class="r" style="left:808px;top:349px;width:185px;letter-spacing:0.33px;">2011.04.08 08:30</div>
<div class="r" style="left:995px;top:349px;width:83px;">139.899</div>
<div class="r" style="left:1080px;top:349px;width:83px;">0.00</div>
<div class="r" style="left:1165px;top:349px;width:94px;">563.36</div>
<svg class="a" style="left:22px;top:347px" width="16" height="17"><path d="M1.5 1.5h8l2.5 2.5v10.5h-10.5z" fill="url(#gd)" stroke="#5a5a5a"/><path d="M9.5 1.5v2.5h2.5" fill="#fff" stroke="#5a5a5a"/><circle cx="11.5" cy="13" r="3.4" fill="url(#gb)" stroke="#1a4fb0" stroke-width="1"/></svg>
<div class="a" style="left:20px;top:365px;width:1243px;height:20px;background:#fff"></div>
<div class="a" style="left:724px;top:366px;width:84px;height:19px;background:#fbf0fb"></div>
<div class="a" style="left:725px;top:366px;width:82px;height:18px;background:#62ed62"></div>
<div class="t" style="left:45px;top:369px;">2392964</div>
<div class="r" style="left:128px;top:369px;width:185px;letter-spacing:0.33px;">2011.04.08 17:00</div>
<div class="r" style="left:315px;top:369px;width:83px;">buy</div>
<div class="r" style="left:400px;top:369px;width:66px;">3.00</div>
<div class="r" style="left:468px;top:369px;width:83px;">gbpusd</div>
<div class="r" style="left:553px;top:369px;width:83px;">1.63469</div>
<div class="r" style="left:638px;top:369px;width:83px;">0.00000</div>
<div class="r" style="left:723px;top:369px;width:83px;">1.63517</div>
<div class="r" style="left:808px;top:369px;width:185px;letter-spacing:0.33px;">2011.04.08 17:59</div>
<div class="r" style="left:995px;top:369px;width:83px;">1.63517</div>
<div class="r" style="left:1080px;top:369px;width:83px;">0.00</div>
<div class="r" style="left:1165px;top:369px;width:94px;">144.00</div>
<svg class="a" style="left:22px;top:367px" width="16" height="17"><path d="M1.5 1.5h8l2.5 2.5v10.5h-10.5z" fill="url(#gd)" stroke="#5a5a5a"/><path d="M9.5 1.5v2.5h2.5" fill="#fff" stroke="#5a5a5a"/><circle cx="11.5" cy="13" r="3.4" fill="url(#gb)" stroke="#1a4fb0" stroke-width="1"/></svg>
<div class="a" style="left:20px;top:385px;width:1243px;height:20px;background:#ebebeb"></div>
<div class="a" style="left:724px;top:386px;width:84px;height:19px;background:#eee0ee"></div>
<div class="a" style="left:725px;top:386px;width:82px;height:18px;background:#62ed62"></div>
<div class="t" style="left:45px;top:389px;">2390706</div>
<div class="r" style="left:128px;top:389px;width:185px;letter-spacing:0.33px;">2011.04.08 14:00</div>
<div class="r" style="left:315px;top:389px;width:83px;">buy</div>
<div class="r" style="left:400px;top:389px;width:66px;">5.00</div>
<div class="r" style="left:468px;top:389px;width:83px;">gbpusd</div>
<div class="r" style="left:553px;top:389px;width:83px;">1.63945</div>
<div class="r" style="left:638px;top:389px;width:83px;">0.00000</div>
<div class="r" style="left:723px;top:389px;width:83px;">1.63990</div>
<div class="r" style="left:808px;top:389px;width:185px;letter-spacing:0.33px;">2011.04.11 13:48</div>
<div class="r" style="left:995px;top:389px;width:83px;">1.63990</div>
<div class="r" style="left:1080px;top:389px;width:83px;">5.07</div>
<div class="r" style="left:1165px;top:389px;width:94px;">225.00</div>
<svg class="a" style="left:22px;top:387px" width="16" height="17"><path d="M1.5 1.5h8l2.5 2.5v10.5h-10.5z" fill="url(#gd)" stroke="#5a5a5a"/><path d="M9.5 1.5v2.5h2.5" fill="#fff" stroke="#5a5a5a"/><circle cx="11.5" cy="13" r="3.4" fill="url(#gb)" stroke="#1a4fb0" stroke-width="1"/></svg>
<div class="a" style="left:20px;top:405px;width:1243px;height:20px;background:#fff"></div>
<div class="a" style="left:724px;top:406px;width:84px;height:19px;background:#fbf0fb"></div>
<div class="a" style="left:725px;top:406px;width:82px;height:18px;background:#62ed62"></div>
<div class="t" style="left:45px;top:409px;">2451558</div>
<div class="r" style="left:128px;top:409px;width:185px;letter-spacing:0.33px;">2011.04.12 13:00</div>
<div class="r" style="left:315px;top:409px;width:83px;">buy</div>
<div class="r" style="left:400px;top:409px;width:66px;">5.00</div>
<div class="r" style="left:468px;top:409px;width:83px;">gbpusd</div>
<div class="r" style="left:553px;top:409px;width:83px;">1.63079</div>
<div class="r" style="left:638px;top:409px;width:83px;">0.00000</div>
<div class="r" style="left:723px;top:409px;width:83px;">1.63118</div>
<div class="r" style="left:808px;top:409px;width:185px;letter-spacing:0.33px;">2011.04.12 13:08</div>
<div class="r" style="left:995px;top:409px;width:83px;">1.63118</div>
<div class="r" style="left:1080px;top:409px;width:83px;">0.00</div>
<div class="r" style="left:1165px;top:409px;width:94px;">195.00</div>
<svg class="a" style="left:22px;top:407px" width="16" height="17"><path d="M1.5 1.5h8l2.5 2.5v10.5h-10.5z" fill="url(#gd)" stroke="#5a5a5a"/><path d="M9.5 1.5v2.5h2.5" fill="#fff" stroke="#5a5a5a"/><circle cx="11.5" cy="13" r="3.4" fill="url(#gb)" stroke="#1a4fb0" stroke-width="1"/></svg>
<div class="a" style="left:20px;top:425px;width:1243px;height:20px;background:#ebebeb"></div>
<div class="a" style="left:724px;top:426px;width:84px;height:19px;background:#eee0ee"></div>
<div class="a" style="left:725px;top:426px;width:82px;height:18px;background:#62ed62"></div>
<div class="t" style="left:45px;top:429px;">2456945</div>
<div class="r" style="left:128px;top:429px;width:185px;letter-spacing:0.33px;">2011.04.12 15:00</div>
<div class="r" style="left:315px;top:429px;width:83px;">sell</div>
<div class="r" style="left:400px;top:429px;width:66px;">5.00</div>
<div class="r" style="left:468px;top:429px;width:83px;">gbpusd</div>
<div class="r" style="left:553px;top:429px;width:83px;">1.62615</div>
<div class="r" style="left:638px;top:429px;width:83px;">0.00000</div>
<div class="r" style="left:723px;top:429px;width:83px;">1.62590</div>
<div class="r" style="left:808px;top:429px;width:185px;letter-spacing:0.33px;">2011.04.12 15:07</div>
<div class="r" style="left:995px;top:429px;width:83px;">1.62590</div>
<div class="r" style="left:1080px;top:429px;width:83px;">0.00</div>
<div class="r" style="left:1165px;top:429px;width:94px;">125.00</div>
<svg class="a" style="left:22px;top:427px" width="16" height="17"><path d="M1.5 1.5h8l2.5 2.5v10.5h-10.5z" fill="url(#gd)" stroke="#5a5a5a"/><path d="M9.5 1.5v2.5h2.5" fill="#fff" stroke="#5a5a5a"/><circle cx="11.5" cy="13" r="3.4" fill="url(#gr)" stroke="#a05010" stroke-width="1"/></svg>
<div class="a" style="left:20px;top:445px;width:1243px;height:20px;background:#fff"></div>
<div class="a" style="left:724px;top:446px;width:84px;height:19px;background:#fbf0fb"></div>
<div class="a" style="left:725px;top:446px;width:82px;height:18px;background:#62ed62"></div>
<div class="t" style="left:45px;top:449px;">2471618</div>
<div class="r" style="left:128px;top:449px;width:185px;letter-spacing:0.33px;">2011.04.13 06:00</div>
<div class="r" style="left:315px;top:449px;width:83px;">buy</div>
<div class="r" style="left:400px;top:449px;width:66px;">5.00</div>
<div class="r" style="left:468px;top:449px;width:83px;">gbpusd</div>
<div class="r" style="left:553px;top:449px;width:83px;">1.62791</div>
<div class="r" style="left:638px;top:449px;width:83px;">0.00000</div>
<div class="r" style="left:723px;top:449px;width:83px;">1.62817</div>
<div class="r" style="left:808px;top:449px;width:185px;letter-spacing:0.33px;">2011.04.13 07:09</div>
<div class="r" style="left:995px;top:449px;width:83px;">1.62817</div>
<div class="r" style="left:1080px;top:449px;width:83px;">0.00</div>
<div class="r" style="left:1165px;top:449px;width:94px;">130.00</div>
<svg class="a" style="left:22px;top:447px" width="16" height="17"><path d="M1.5 1.5h8l2.5 2.5v10.5h-10.5z" fill="url(#gd)" stroke="#5a5a5a"/><path d="M9.5 1.5v2.5h2.5" fill="#fff" stroke="#5a5a5a"/><circle cx="11.5" cy="13" r="3.4" fill="url(#gb)" stroke="#1a4fb0" stroke-width="1"/></svg>
<div class="a" style="left:20px;top:465px;width:1243px;height:20px;background:#ebebeb"></div>
<div class="a" style="left:724px;top:466px;width:84px;height:19px;background:#eee0ee"></div>
<div class="a" style="left:725px;top:466px;width:82px;height:18px;background:#62ed62"></div>
<div class="t" style="left:45px;top:469px;">2513546</div>
<div class="r" style="left:128px;top:469px;width:185px;letter-spacing:0.33px;">2011.04.14 09:00</div>
<div class="r" style="left:315px;top:469px;width:83px;">sell</div>
<div class="r" style="left:400px;top:469px;width:66px;">5.00</div>
<div class="r" style="left:468px;top:469px;width:83px;">eurusd</div>
<div class="r" style="left:553px;top:469px;width:83px;">1.44680</div>
<div class="r" style="left:638px;top:469px;width:83px;">0.00000</div>
<div class="r" style="left:723px;top:469px;width:83px;">1.44644</div>
<div class="r" style="left:808px;top:469px;width:185px;letter-spacing:0.33px;">2011.04.14 09:03</div>
<div class="r" style="left:995px;top:469px;width:83px;">1.44644</div>
<div class="r" style="left:1080px;top:469px;width:83px;">0.00</div>
<div class="r" style="left:1165px;top:469px;width:94px;">180.00</div>
<svg class="a" style="left:22px;top:467px" width="16" height="17"><path d="M1.5 1.5h8l2.5 2.5v10.5h-10.5z" fill="url(#gd)" stroke="#5a5a5a"/><path d="M9.5 1.5v2.5h2.5" fill="#fff" stroke="#5a5a5a"/><circle cx="11.5" cy="13" r="3.4" fill="url(#gr)" stroke="#a05010" stroke-width="1"/></svg>
<div class="a" style="left:20px;top:485px;width:1243px;height:20px;background:#fff"></div>
<div class="a" style="left:724px;top:486px;width:84px;height:19px;background:#fbf0fb"></div>
<div class="a" style="left:725px;top:486px;width:82px;height:18px;background:#62ed62"></div>
<div class="t" style="left:45px;top:489px;">2528253</div>
<div class="r" style="left:128px;top:489px;width:185px;letter-spacing:0.33px;">2011.04.14 15:00</div>
<div class="r" style="left:315px;top:489px;width:83px;">buy</div>
<div class="r" style="left:400px;top:489px;width:66px;">5.00</div>
<div class="r" style="left:468px;top:489px;width:83px;">gbpusd</div>
<div class="r" style="left:553px;top:489px;width:83px;">1.63615</div>
<div class="r" style="left:638px;top:489px;width:83px;">0.00000</div>
<div class="r" style="left:723px;top:489px;width:83px;">1.63653</div>
<div class="r" style="left:808px;top:489px;width:185px;letter-spacing:0.33px;">2011.04.14 16:15</div>
<div class="r" style="left:995px;top:489px;width:83px;">1.63653</div>
<div class="r" style="left:1080px;top:489px;width:83px;">0.00</div>
<div class="r" style="left:1165px;top:489px;width:94px;">190.00</div>
<svg class="a" style="left:22px;top:487px" width="16" height="17"><path d="M1.5 1.5h8l2.5 2.5v10.5h-10.5z" fill="url(#gd)" stroke="#5a5a5a"/><path d="M9.5 1.5v2.5h2.5" fill="#fff" stroke="#5a5a5a"/><circle cx="11.5" cy="13" r="3.4" fill="url(#gb)" stroke="#1a4fb0" stroke-width="1"/></svg>
<div class="a" style="left:20px;top:505px;width:1243px;height:20px;background:#ebebeb"></div>
<div class="t" style="left:45px;top:509px;">2539347</div>
<div class="r" style="left:128px;top:509px;width:185px;letter-spacing:0.33px;">2011.04.15 10:00</div>
<div class="r" style="left:315px;top:509px;width:83px;">buy</div>
<div class="r" style="left:400px;top:509px;width:66px;">5.00</div>
<div class="r" style="left:468px;top:509px;width:83px;">gbpjpy</div>
<div class="r" style="left:553px;top:509px;width:83px;">136.341</div>
<div class="r" style="left:638px;top:509px;width:83px;">0.000</div>
<div class="r" style="left:723px;top:509px;width:83px;">136.446</div>
<div class="r" style="left:808px;top:509px;width:185px;letter-spacing:0.33px;">2011.04.15 10:05</div>
<div class="r" style="left:995px;top:509px;width:83px;">136.375</div>
<div class="r" style="left:1080px;top:509px;width:83px;">0.00</div>
<div class="r" style="left:1165px;top:509px;width:94px;">203.95</div>
<svg class="a" style="left:22px;top:507px" width="16" height="17"><path d="M1.5 1.5h8l2.5 2.5v10.5h-10.5z" fill="url(#gd)" stroke="#5a5a5a"/><path d="M9.5 1.5v2.5h2.5" fill="#fff" stroke="#5a5a5a"/><circle cx="11.5" cy="13" r="3.4" fill="url(#gb)" stroke="#1a4fb0" stroke-width="1"/></svg>
<div class="a" style="left:20px;top:525px;width:1243px;height:20px;background:#fff"></div>
<div class="a" style="left:724px;top:526px;width:84px;height:19px;background:#fbf0fb"></div>
<div class="a" style="left:725px;top:526px;width:82px;height:18px;background:#62ed62"></div>
<div class="t" style="left:45px;top:529px;">2565670</div>
<div class="r" style="left:128px;top:529px;width:185px;letter-spacing:0.33px;">2011.04.18 14:28</div>
<div class="r" style="left:315px;top:529px;width:83px;">buy</div>
<div class="r" style="left:400px;top:529px;width:66px;">5.00</div>
<div class="r" style="left:468px;top:529px;width:83px;">gbpusd</div>
<div class="r" style="left:553px;top:529px;width:83px;">1.62785</div>
<div class="r" style="left:638px;top:529px;width:83px;">0.00000</div>
<div class="r" style="left:723px;top:529px;width:83px;">1.62811</div>
<div class="r" style="left:808px;top:529px;width:185px;letter-spacing:0.33px;">2011.04.19 09:11</div>
<div class="r" style="left:995px;top:529px;width:83px;">1.62811</div>
<div class="r" style="left:1080px;top:529px;width:83px;">5.04</div>
<div class="r" style="left:1165px;top:529px;width:94px;">130.00</div>
<svg class="a" style="left:22px;top:527px" width="16" height="17"><path d="M1.5 1.5h8l2.5 2.5v10.5h-10.5z" fill="url(#gd)" stroke="#5a5a5a"/><path d="M9.5 1.5v2.5h2.5" fill="#fff" stroke="#5a5a5a"/><circle cx="11.5" cy="13" r="3.4" fill="url(#gb)" stroke="#1a4fb0" stroke-width="1"/></svg>
<div class="a" style="left:20px;top:545px;width:1243px;height:20px;background:#ebebeb"></div>
<div class="a" style="left:724px;top:546px;width:84px;height:19px;background:#eee0ee"></div>
<div class="a" style="left:725px;top:546px;width:82px;height:18px;background:#62ed62"></div>
<div class="t" style="left:45px;top:549px;">2601274</div>
<div class="r" style="left:128px;top:549px;width:185px;letter-spacing:0.33px;">2011.04.20 14:00</div>
<div class="r" style="left:315px;top:549px;width:83px;">sell</div>
<div class="r" style="left:400px;top:549px;width:66px;">5.00</div>
<div class="r" style="left:468px;top:549px;width:83px;">gbpjpy</div>
<div class="r" style="left:553px;top:549px;width:83px;">135.268</div>
<div class="r" style="left:638px;top:549px;width:83px;">0.000</div>
<div class="r" style="left:723px;top:549px;width:83px;">135.190</div>
<div class="r" style="left:808px;top:549px;width:185px;letter-spacing:0.33px;">2011.04.20 14:07</div>
<div class="r" style="left:995px;top:549px;width:83px;">135.190</div>
<div class="r" style="left:1080px;top:549px;width:83px;">0.00</div>
<div class="r" style="left:1165px;top:549px;width:94px;">472.87</div>
<svg class="a" style="left:22px;top:547px" width="16" height="17"><path d="M1.5 1.5h8l2.5 2.5v10.5h-10.5z" fill="url(#gd)" stroke="#5a5a5a"/><path d="M9.5 1.5v2.5h2.5" fill="#fff" stroke="#5a5a5a"/><circle cx="11.5" cy="13" r="3.4" fill="url(#gr)" stroke="#a05010" stroke-width="1"/></svg>
<div class="a" style="left:20px;top:565px;width:1243px;height:20px;background:#fff"></div>
<div class="t" style="left:45px;top:569px;">2666221</div>
<div class="r" style="left:128px;top:569px;width:185px;letter-spacing:0.33px;">2011.04.26 16:01</div>
<div class="r" style="left:315px;top:569px;width:83px;">buy</div>
<div class="r" style="left:400px;top:569px;width:66px;">5.00</div>
<div class="r" style="left:468px;top:569px;width:83px;">gbpjpy</div>
<div class="r" style="left:553px;top:569px;width:83px;">134.894</div>
<div class="r" style="left:638px;top:569px;width:83px;">0.000</div>
<div class="r" style="left:723px;top:569px;width:83px;">134.933</div>
<div class="r" style="left:808px;top:569px;width:185px;letter-spacing:0.33px;">2011.04.26 16:10</div>
<div class="r" style="left:995px;top:569px;width:83px;">134.909</div>
<div class="r" style="left:1080px;top:569px;width:83px;">0.00</div>
<div class="r" style="left:1165px;top:569px;width:94px;">91.58</div>
<svg class="a" style="left:22px;top:567px" width="16" height="17"><path d="M1.5 1.5h8l2.5 2.5v10.5h-10.5z" fill="url(#gd)" stroke="#5a5a5a"/><path d="M9.5 1.5v2.5h2.5" fill="#fff" stroke="#5a5a5a"/><circle cx="11.5" cy="13" r="3.4" fill="url(#gb)" stroke="#1a4fb0" stroke-width="1"/></svg>
<div class="a" style="left:20px;top:585px;width:1243px;height:20px;background:#ebebeb"></div>
<div class="a" style="left:724px;top:586px;width:84px;height:19px;background:#eee0ee"></div>
<div class="a" style="left:725px;top:586px;width:82px;height:18px;background:#62ed62"></div>
<div class="t" style="left:45px;top:589px;">2773685</div>
<div class="r" style="left:128px;top:589px;width:185px;letter-spacing:0.33px;">2011.05.02 12:00</div>
<div class="r" style="left:315px;top:589px;width:83px;">buy</div>
<div class="r" style="left:400px;top:589px;width:66px;">5.00</div>
<div class="r" style="left:468px;top:589px;width:83px;">gbpusd</div>
<div class="r" style="left:553px;top:589px;width:83px;">1.66886</div>
<div class="r" style="left:638px;top:589px;width:83px;">0.00000</div>
<div class="r" style="left:723px;top:589px;width:83px;">1.66909</div>
<div class="r" style="left:808px;top:589px;width:185px;letter-spacing:0.33px;">2011.05.02 12:20</div>
<div class="r" style="left:995px;top:589px;width:83px;">1.66909</div>
<div class="r" style="left:1080px;top:589px;width:83px;">0.00</div>
<div class="r" style="left:1165px;top:589px;width:94px;">115.00</div>
<svg class="a" style="left:22px;top:587px" width="16" height="17"><path d="M1.5 1.5h8l2.5 2.5v10.5h-10.5z" fill="url(#gd)" stroke="#5a5a5a"/><path d="M9.5 1.5v2.5h2.5" fill="#fff" stroke="#5a5a5a"/><circle cx="11.5" cy="13" r="3.4" fill="url(#gb)" stroke="#1a4fb0" stroke-width="1"/></svg>
<div class="a" style="left:20px;top:605px;width:1243px;height:20px;background:#fff"></div>
<div class="a" style="left:724px;top:606px;width:84px;height:19px;background:#fbf0fb"></div>
<div class="a" style="left:725px;top:606px;width:82px;height:18px;background:#62ed62"></div>
<div class="t" style="left:45px;top:609px;">2776336</div>
<div class="r" style="left:128px;top:609px;width:185px;letter-spacing:0.33px;">2011.05.02 14:02</div>
<div class="r" style="left:315px;top:609px;width:83px;">sell</div>
<div class="r" style="left:400px;top:609px;width:66px;">5.00</div>
<div class="r" style="left:468px;top:609px;width:83px;">gbpjpy</div>
<div class="r" style="left:553px;top:609px;width:83px;">135.621</div>
<div class="r" style="left:638px;top:609px;width:83px;">0.000</div>
<div class="r" style="left:723px;top:609px;width:83px;">135.467</div>
<div class="r" style="left:808px;top:609px;width:185px;letter-spacing:0.33px;">2011.05.02 14:26</div>
<div class="r" style="left:995px;top:609px;width:83px;">135.467</div>
<div class="r" style="left:1080px;top:609px;width:83px;">0.00</div>
<div class="r" style="left:1165px;top:609px;width:94px;">948.66</div>
<svg class="a" style="left:22px;top:607px" width="16" height="17"><path d="M1.5 1.5h8l2.5 2.5v10.5h-10.5z" fill="url(#gd)" stroke="#5a5a5a"/><path d="M9.5 1.5v2.5h2.5" fill="#fff" stroke="#5a5a5a"/><circle cx="11.5" cy="13" r="3.4" fill="url(#gr)" stroke="#a05010" stroke-width="1"/></svg>
<div class="a" style="left:20px;top:625px;width:1243px;height:20px;background:#ebebeb"></div>
<div class="a" style="left:724px;top:626px;width:84px;height:19px;background:#eee0ee"></div>
<div class="a" style="left:725px;top:626px;width:82px;height:18px;background:#62ed62"></div>
<div class="t" style="left:45px;top:629px;">2801121</div>
<div class="r" style="left:128px;top:629px;width:185px;letter-spacing:0.33px;">2011.05.03 06:22</div>
<div class="r" style="left:315px;top:629px;width:83px;">buy</div>
<div class="r" style="left:400px;top:629px;width:66px;">5.00</div>
<div class="r" style="left:468px;top:629px;width:83px;">eurusd</div>
<div class="r" style="left:553px;top:629px;width:83px;">1.48279</div>
<div class="r" style="left:638px;top:629px;width:83px;">0.00000</div>
<div class="r" style="left:723px;top:629px;width:83px;">1.48350</div>
<div class="r" style="left:808px;top:629px;width:185px;letter-spacing:0.33px;">2011.05.03 06:34</div>
<div class="r" style="left:995px;top:629px;width:83px;">1.48350</div>
<div class="r" style="left:1080px;top:629px;width:83px;">0.00</div>
<div class="r" style="left:1165px;top:629px;width:94px;">355.00</div>
<svg class="a" style="left:22px;top:627px" width="16" height="17"><path d="M1.5 1.5h8l2.5 2.5v10.5h-10.5z" fill="url(#gd)" stroke="#5a5a5a"/><path d="M9.5 1.5v2.5h2.5" fill="#fff" stroke="#5a5a5a"/><circle cx="11.5" cy="13" r="3.4" fill="url(#gb)" stroke="#1a4fb0" stroke-width="1"/></svg>
<div class="a" style="left:20px;top:645px;width:1243px;height:20px;background:#fff"></div>
<div class="a" style="left:724px;top:646px;width:84px;height:19px;background:#fbf0fb"></div>
<div class="a" style="left:725px;top:646px;width:82px;height:18px;background:#62ed62"></div>
<div class="t" style="left:45px;top:649px;">2823472</div>
<div class="r" style="left:128px;top:649px;width:185px;letter-spacing:0.33px;">2011.05.03 14:00</div>
<div class="r" style="left:315px;top:649px;width:83px;">buy</div>
<div class="r" style="left:400px;top:649px;width:66px;">5.00</div>
<div class="r" style="left:468px;top:649px;width:83px;">eurusd</div>
<div class="r" style="left:553px;top:649px;width:83px;">1.48272</div>
<div class="r" style="left:638px;top:649px;width:83px;">0.00000</div>
<div class="r" style="left:723px;top:649px;width:83px;">1.48294</div>
<div class="r" style="left:808px;top:649px;width:185px;letter-spacing:0.33px;">2011.05.03 14:02</div>
<div class="r" style="left:995px;top:649px;width:83px;">1.48294</div>
<div class="r" style="left:1080px;top:649px;width:83px;">0.00</div>
<div class="r" style="left:1165px;top:649px;width:94px;">110.00</div>
<svg class="a" style="left:22px;top:647px" width="16" height="17"><path d="M1.5 1.5h8l2.5 2.5v10.5h-10.5z" fill="url(#gd)" stroke="#5a5a5a"/><path d="M9.5 1.5v2.5h2.5" fill="#fff" stroke="#5a5a5a"/><circle cx="11.5" cy="13" r="3.4" fill="url(#gb)" stroke="#1a4fb0" stroke-width="1"/></svg>
<div class="a" style="left:20px;top:665px;width:1243px;height:20px;background:#ebebeb"></div>
<div class="a" style="left:724px;top:666px;width:84px;height:19px;background:#eee0ee"></div>
<div class="a" style="left:725px;top:666px;width:82px;height:18px;background:#62ed62"></div>
<div class="t" style="left:45px;top:669px;">2916438</div>
<div class="r" style="left:128px;top:669px;width:185px;letter-spacing:0.33px;">2011.05.06 11:38</div>
<div class="r" style="left:315px;top:669px;width:83px;">buy</div>
<div class="r" style="left:400px;top:669px;width:66px;">5.00</div>
<div class="r" style="left:468px;top:669px;width:83px;">gbpusd</div>
<div class="r" style="left:553px;top:669px;width:83px;">1.64234</div>
<div class="r" style="left:638px;top:669px;width:83px;">0.00000</div>
<div class="r" style="left:723px;top:669px;width:83px;">1.64283</div>
<div class="r" style="left:808px;top:669px;width:185px;letter-spacing:0.33px;">2011.05.06 11:57</div>
<div class="r" style="left:995px;top:669px;width:83px;">1.64283</div>
<div class="r" style="left:1080px;top:669px;width:83px;">0.00</div>
<div class="r" style="left:1165px;top:669px;width:94px;">245.00</div>
<svg class="a" style="left:22px;top:667px" width="16" height="17"><path d="M1.5 1.5h8l2.5 2.5v10.5h-10.5z" fill="url(#gd)" stroke="#5a5a5a"/><path d="M9.5 1.5v2.5h2.5" fill="#fff" stroke="#5a5a5a"/><circle cx="11.5" cy="13" r="3.4" fill="url(#gb)" stroke="#1a4fb0" stroke-width="1"/></svg>
<div class="a" style="left:20px;top:685px;width:1243px;height:20px;background:#fff"></div>
<div class="t" style="left:45px;top:689px;">2946132</div>
<div class="r" style="left:128px;top:689px;width:185px;letter-spacing:0.33px;">2011.05.09 13:36</div>
<div class="r" style="left:315px;top:689px;width:83px;">sell</div>
<div class="r" style="left:400px;top:689px;width:66px;">5.00</div>
<div class="r" style="left:468px;top:689px;width:83px;">gbpjpy</div>
<div class="r" style="left:553px;top:689px;width:83px;">131.655</div>
<div class="r" style="left:638px;top:689px;width:83px;">0.000</div>
<div class="r" style="left:723px;top:689px;width:83px;">131.551</div>
<div class="r" style="left:808px;top:689px;width:185px;letter-spacing:0.33px;">2011.05.09 13:39</div>
<div class="r" style="left:995px;top:689px;width:83px;">131.659</div>
<div class="r" style="left:1080px;top:689px;width:83px;">0.00</div>
<div class="r" style="left:1165px;top:689px;width:94px;">-24.80</div>
<svg class="a" style="left:22px;top:687px" width="16" height="17"><path d="M1.5 1.5h8l2.5 2.5v10.5h-10.5z" fill="url(#gd)" stroke="#5a5a5a"/><path d="M9.5 1.5v2.5h2.5" fill="#fff" stroke="#5a5a5a"/><circle cx="11.5" cy="13" r="3.4" fill="url(#gr)" stroke="#a05010" stroke-width="1"/></svg>
<div class="a" style="left:20px;top:705px;width:1243px;height:20px;background:#ebebeb"></div>
<div class="a" style="left:724px;top:706px;width:84px;height:19px;background:#eee0ee"></div>
<div class="a" style="left:725px;top:706px;width:82px;height:18px;background:#62ed62"></div>
<div class="t" style="left:45px;top:709px;">2947022</div>
<div class="r" style="left:128px;top:709px;width:185px;letter-spacing:0.33px;">2011.05.09 14:08</div>
<div class="r" style="left:315px;top:709px;width:83px;">sell</div>
<div class="r" style="left:400px;top:709px;width:66px;">5.00</div>
<div class="r" style="left:468px;top:709px;width:83px;">gbpjpy</div>
<div class="r" style="left:553px;top:709px;width:83px;">131.539</div>
<div class="r" style="left:638px;top:709px;width:83px;">0.000</div>
<div class="r" style="left:723px;top:709px;width:83px;">131.498</div>
<div class="r" style="left:808px;top:709px;width:185px;letter-spacing:0.33px;">2011.05.09 14:20</div>
<div class="r" style="left:995px;top:709px;width:83px;">131.498</div>
<div class="r" style="left:1080px;top:709px;width:83px;">0.00</div>
<div class="r" style="left:1165px;top:709px;width:94px;">254.07</div>
<svg class="a" style="left:22px;top:707px" width="16" height="17"><path d="M1.5 1.5h8l2.5 2.5v10.5h-10.5z" fill="url(#gd)" stroke="#5a5a5a"/><path d="M9.5 1.5v2.5h2.5" fill="#fff" stroke="#5a5a5a"/><circle cx="11.5" cy="13" r="3.4" fill="url(#gr)" stroke="#a05010" stroke-width="1"/></svg>
<div class="a" style="left:20px;top:325px;width:1243px;height:1px;background:#c8c8c8"></div>
<div class="a" style="left:20px;top:345px;width:1243px;height:1px;background:#c8c8c8"></div>
<div class="a" style="left:20px;top:365px;width:1243px;height:1px;background:#c8c8c8"></div>
<div class="a" style="left:20px;top:385px;width:1243px;height:1px;background:#c8c8c8"></div>
<div class="a" style="left:20px;top:405px;width:1243px;height:1px;background:#c8c8c8"></div>
<div class="a" style="left:20px;top:425px;width:1243px;height:1px;background:#c8c8c8"></div>
<div class="a" style="left:20px;top:445px;width:1243px;height:1px;background:#c8c8c8"></div>
<div class="a" style="left:20px;top:465px;width:1243px;height:1px;background:#c8c8c8"></div>
<div class="a" style="left:20px;top:485px;width:1243px;height:1px;background:#c8c8c8"></div>
<div class="a" style="left:20px;top:505px;width:1243px;height:1px;background:#c8c8c8"></div>
<div class="a" style="left:20px;top:525px;width:1243px;height:1px;background:#c8c8c8"></div>
<div class="a" style="left:20px;top:545px;width:1243px;height:1px;background:#c8c8c8"></div>
<div class="a" style="left:20px;top:565px;width:1243px;height:1px;background:#c8c8c8"></div>
<div class="a" style="left:20px;top:585px;width:1243px;height:1px;background:#c8c8c8"></div>
<div class="a" style="left:20px;top:605px;width:1243px;height:1px;background:#c8c8c8"></div>
<div class="a" style="left:20px;top:625px;width:1243px;height:1px;background:#c8c8c8"></div>
<div class="a" style="left:20px;top:645px;width:1243px;height:1px;background:#c8c8c8"></div>
<div class="a" style="left:20px;top:665px;width:1243px;height:1px;background:#c8c8c8"></div>
<div class="a" style="left:20px;top:685px;width:1243px;height:1px;background:#c8c8c8"></div>
<div class="a" style="left:20px;top:705px;width:1243px;height:1px;background:#c8c8c8"></div>
<div class="a" style="left:128px;top:305px;width:1px;height:420px;background:#c8c8c8"></div>
<div class="a" style="left:315px;top:305px;width:1px;height:420px;background:#c8c8c8"></div>
<div class="a" style="left:400px;top:305px;width:1px;height:420px;background:#c8c8c8"></div>
<div class="a" style="left:468px;top:305px;width:1px;height:420px;background:#c8c8c8"></div>
<div class="a" style="left:553px;top:305px;width:1px;height:420px;background:#c8c8c8"></div>
<div class="a" style="left:638px;top:305px;width:1px;height:420px;background:#c8c8c8"></div>
<div class="a" style="left:723px;top:305px;width:1px;height:420px;background:#c8c8c8"></div>
<div class="a" style="left:808px;top:305px;width:1px;height:420px;background:#c8c8c8"></div>
<div class="a" style="left:995px;top:305px;width:1px;height:420px;background:#c8c8c8"></div>
<div class="a" style="left:1080px;top:305px;width:1px;height:420px;background:#c8c8c8"></div>
<div class="a" style="left:1165px;top:305px;width:1px;height:420px;background:#c8c8c8"></div>
<div class="a" style="left:20px;top:725px;width:1243px;height:4px;background:#c8c8c8"></div>
<svg class="a" style="left:8px;top:287px" width="7" height="6"><path d="M0.5 0.5l6 5M6.5 0.5l-6 5" stroke="#000" stroke-width="1.6"/></svg>
<div class="a" style="left:5px;top:298px;width:13px;height:452px;background:linear-gradient(#9ab5e8,#7b9ae0)"></div>
<svg class="a" style="left:0px;top:690px" width="20" height="62"><text transform="translate(16.5,57.5) rotate(-90)" textLength="41" lengthAdjust="spacingAndGlyphs" font-family="Liberation Sans" font-size="11" fill="#fff">Terminal</text></svg>
<div class="a" style="left:19px;top:729px;width:1261px;height:1px;background:#000"></div>
<div class="a" style="left:19px;top:730px;width:1px;height:19px;background:#aca899"></div>
<svg class="a" style="left:31px;top:729px;overflow:visible" width="31" height="18"><text x="1" y="14" textLength="28" lengthAdjust="spacingAndGlyphs" font-family="Liberation Sans" font-size="11" font-weight="normal" fill="#7d7b6e" xml:space="preserve">Trade</text></svg>
<div class="a" style="left:70px;top:729px;width:95px;height:18px;background:#fff;border-left:1px solid #000;border-right:1px solid #000;border-bottom:1px solid #000;box-shadow:1px 1px 0 #808080"></div>
<svg class="a" style="left:79px;top:728px;overflow:visible" width="79" height="18"><text x="1" y="14" textLength="76" lengthAdjust="spacingAndGlyphs" font-family="Liberation Sans" font-size="11" font-weight="normal" fill="#000" xml:space="preserve">Account History</text></svg>
<svg class="a" style="left:175px;top:729px;overflow:visible" width="31" height="18"><text x="1" y="14" textLength="28" lengthAdjust="spacingAndGlyphs" font-family="Liberation Sans" font-size="11" font-weight="normal" fill="#7d7b6e" xml:space="preserve">Alerts</text></svg>
<div class="a" style="left:214px;top:732px;width:1px;height:13px;background:#716f64"></div>
<svg class="a" style="left:223px;top:729px;overflow:visible" width="39" height="18"><text x="1" y="14" textLength="36" lengthAdjust="spacingAndGlyphs" font-family="Liberation Sans" font-size="11" font-weight="normal" fill="#7d7b6e" xml:space="preserve">Mailbox</text></svg>
<div class="a" style="left:270px;top:732px;width:1px;height:13px;background:#716f64"></div>
<svg class="a" style="left:279px;top:729px;overflow:visible" width="40" height="18"><text x="1" y="14" textLength="37" lengthAdjust="spacingAndGlyphs" font-family="Liberation Sans" font-size="11" font-weight="normal" fill="#7d7b6e" xml:space="preserve">Experts</text></svg>
<div class="a" style="left:327px;top:732px;width:1px;height:13px;background:#716f64"></div>
<svg class="a" style="left:336px;top:729px;overflow:visible" width="38" height="18"><text x="1" y="14" textLength="35" lengthAdjust="spacingAndGlyphs" font-family="Liberation Sans" font-size="11" font-weight="normal" fill="#7d7b6e" xml:space="preserve">Journal</text></svg>
<div class="a" style="left:382px;top:732px;width:1px;height:13px;background:#716f64"></div>
<div class="a" style="left:4px;top:749px;width:1278px;height:1px;background:#fff"></div>
<div class="a" style="left:1263px;top:285px;width:17px;height:444px;background:linear-gradient(90deg,#f3f1ec,#fefefb)"></div>
<div class="a" style="left:1264px;top:286px;width:15px;height:16px;background:linear-gradient(135deg,#d6e2fd,#b9cdfb);border:1px solid #fff;border-radius:2px;box-shadow:0 0 0 1px #b5c9f2 inset"></div>
<div class="a" style="left:1264px;top:712px;width:15px;height:16px;background:linear-gradient(135deg,#d6e2fd,#b9cdfb);border:1px solid #fff;border-radius:2px;box-shadow:0 0 0 1px #b5c9f2 inset"></div>
<svg class="a" style="left:1264px;top:286px" width="15" height="16"><path d="M4 10l3.5-3.5L11 10" stroke="#4d6185" stroke-width="2" fill="none"/></svg>
<svg class="a" style="left:1264px;top:712px" width="15" height="16"><path d="M4 6l3.5 3.5L11 6" stroke="#4d6185" stroke-width="2" fill="none"/></svg>
<div class="a" style="left:1265px;top:321px;width:14px;height:372px;background:linear-gradient(90deg,#c4d4fb,#c8d8fc 50%,#b4cafa);border-radius:2px;box-shadow:0 0 0 1px #b0c4f2 inset"></div>
<div class="a" style="left:1278px;top:322px;width:1px;height:370px;background:#fff"></div>
<div class="a" style="left:1279px;top:322px;width:1px;height:370px;background:#a4b8e0"></div>
<div class="a" style="left:1264px;top:692px;width:16px;height:2px;border-radius:0 0 3px 3px;background:#fff;box-shadow:0 1px 0 #a9bff0"></div>
<svg class="a" style="left:1268px;top:503px" width="9" height="9"><rect x="0" y="0" width="6" height="1" fill="#fff"/><rect x="1" y="1" width="6" height="1" fill="#7fa0ec"/><rect x="0" y="2" width="6" height="1" fill="#fff"/><rect x="1" y="3" width="6" height="1" fill="#7fa0ec"/><rect x="0" y="4" width="6" height="1" fill="#fff"/><rect x="1" y="5" width="6" height="1" fill="#7fa0ec"/><rect x="0" y="6" width="6" height="1" fill="#fff"/><rect x="1" y="7" width="6" height="1" fill="#7fa0ec"/></svg>
<div class="a" style="left:4px;top:752px;width:1280px;height:1px;background:#aca899"></div>
<div class="a" style="left:4px;top:753px;width:1280px;height:1px;background:#fff"></div>
<svg class="a" style="left:5px;top:755px;overflow:visible" width="90" height="18"><text x="1" y="14" textLength="87" lengthAdjust="spacingAndGlyphs" font-family="Liberation Sans" font-size="11" font-weight="normal" fill="#000" xml:space="preserve">For Help, press F1</text></svg>
<div class="a" style="left:563px;top:757px;width:1px;height:16px;background:#aca899"></div><div class="a" style="left:564px;top:757px;width:1px;height:16px;background:#fff"></div>
<div class="a" style="left:672px;top:757px;width:1px;height:16px;background:#aca899"></div><div class="a" style="left:673px;top:757px;width:1px;height:16px;background:#fff"></div>
<div class="a" style="left:773px;top:757px;width:1px;height:16px;background:#aca899"></div><div class="a" style="left:774px;top:757px;width:1px;height:16px;background:#fff"></div>
<div class="a" style="left:845px;top:757px;width:1px;height:16px;background:#aca899"></div><div class="a" style="left:846px;top:757px;width:1px;height:16px;background:#fff"></div>
<div class="a" style="left:916px;top:757px;width:1px;height:16px;background:#aca899"></div><div class="a" style="left:917px;top:757px;width:1px;height:16px;background:#fff"></div>
<div class="a" style="left:985px;top:757px;width:1px;height:16px;background:#aca899"></div><div class="a" style="left:986px;top:757px;width:1px;height:16px;background:#fff"></div>
<div class="a" style="left:1056px;top:757px;width:1px;height:16px;background:#aca899"></div><div class="a" style="left:1057px;top:757px;width:1px;height:16px;background:#fff"></div>
<div class="a" style="left:1122px;top:757px;width:1px;height:16px;background:#aca899"></div><div class="a" style="left:1123px;top:757px;width:1px;height:16px;background:#fff"></div>
<svg class="a" style="left:568px;top:755px;overflow:visible" width="38" height="18"><text x="1" y="14" textLength="35" lengthAdjust="spacingAndGlyphs" font-family="Liberation Sans" font-size="11" font-weight="normal" fill="#000" xml:space="preserve">Default</text></svg>
<svg class="a" style="left:677px;top:755px;overflow:visible" width="90" height="18"><text x="1" y="14" textLength="87" lengthAdjust="spacingAndGlyphs" font-family="Liberation Sans" font-size="11" font-weight="normal" fill="#000" xml:space="preserve">2011.05.10 10:00</text></svg>
<svg class="a" style="left:777px;top:755px;overflow:visible" width="59" height="18"><text x="1" y="14" textLength="56" lengthAdjust="spacingAndGlyphs" font-family="Liberation Sans" font-size="11" font-weight="normal" fill="#000" xml:space="preserve">O: 1.63545</text></svg>
<svg class="a" style="left:849px;top:755px;overflow:visible" width="58" height="18"><text x="1" y="14" textLength="55" lengthAdjust="spacingAndGlyphs" font-family="Liberation Sans" font-size="11" font-weight="normal" fill="#000" xml:space="preserve">H: 1.63657</text></svg>
<svg class="a" style="left:920px;top:755px;overflow:visible" width="56" height="18"><text x="1" y="14" textLength="53" lengthAdjust="spacingAndGlyphs" font-family="Liberation Sans" font-size="11" font-weight="normal" fill="#000" xml:space="preserve">L: 1.63338</text></svg>
<svg class="a" style="left:990px;top:755px;overflow:visible" width="57" height="18"><text x="1" y="14" textLength="54" lengthAdjust="spacingAndGlyphs" font-family="Liberation Sans" font-size="11" font-weight="normal" fill="#000" xml:space="preserve">C: 1.63343</text></svg>
<svg class="a" style="left:1061px;top:755px;overflow:visible" width="40" height="18"><text x="1" y="14" textLength="37" lengthAdjust="spacingAndGlyphs" font-family="Liberation Sans" font-size="11" font-weight="normal" fill="#000" xml:space="preserve">V: 3008</text></svg>
<svg class="a" style="left:1175px;top:755px;overflow:visible" width="51" height="18"><text x="1" y="14" textLength="48" lengthAdjust="spacingAndGlyphs" font-family="Liberation Sans" font-size="11" font-weight="normal" fill="#000" xml:space="preserve">1523/0 kb</text></svg>
<svg class="a" style="left:1128px;top:759px" width="24" height="13"><rect x="0" y="0" width="2" height="9" fill="#4a7000"/><rect x="0" y="10" width="2" height="2" fill="#8a0000"/><rect x="3" y="0" width="2" height="8" fill="#4a7000"/><rect x="3" y="9" width="2" height="3" fill="#8a0000"/><rect x="6" y="0" width="2" height="7" fill="#4a7000"/><rect x="6" y="8" width="2" height="4" fill="#8a0000"/><rect x="9" y="0" width="2" height="6" fill="#4a7000"/><rect x="9" y="7" width="2" height="5" fill="#8a0000"/><rect x="12" y="0" width="2" height="5" fill="#4a7000"/><rect x="12" y="6" width="2" height="6" fill="#8a0000"/><rect x="15" y="0" width="2" height="4" fill="#4a7000"/><rect x="15" y="5" width="2" height="7" fill="#8a0000"/><rect x="18" y="0" width="2" height="3" fill="#4a7000"/><rect x="18" y="4" width="2" height="8" fill="#8a0000"/><rect x="21" y="0" width="2" height="2" fill="#4a7000"/><rect x="21" y="3" width="2" height="9" fill="#8a0000"/></svg>
<svg class="a" style="left:1269px;top:759px" width="15" height="15"><path d="M14.5 1.5L1.5 14.5M14.5 5.5L5.5 14.5M14.5 9.5L9.5 14.5" stroke="#aca899" stroke-width="1.2"/><path d="M14.5 2.5L2.5 14.5M14.5 6.5L6.5 14.5M14.5 10.5L10.5 14.5" stroke="#fff" stroke-width="0.9"/></svg>
<div class="a" style="left:4px;top:774px;width:1280px;height:4px;background:#2a60d8;border-top:1px solid #3d7cf0"></div>
<div class="a" style="left:1192px;top:774px;width:92px;height:4px;background:#0f9ff2;border-top:1px solid #2ab4f8"></div>
<div class="a" style="left:4px;top:774px;width:93px;height:4px;background:#3a9a3a;border-top:1px solid #5ab45a"></div>
<div class="a" style="left:7px;top:776px;width:62px;height:2px;background:#9aa890"></div>
</body></html>
